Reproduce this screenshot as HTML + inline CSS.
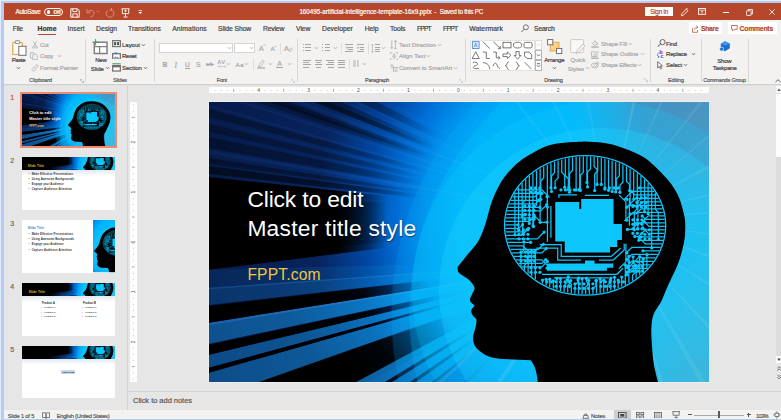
<!DOCTYPE html><html><head><meta charset="utf-8"><title>PowerPoint</title><style>
html,body{margin:0;padding:0}
body{width:781px;height:420px;overflow:hidden;position:relative;background:#b3cbf7;font-family:"Liberation Sans",sans-serif;color:#444}
.a{position:absolute}
.t{position:absolute;white-space:nowrap;line-height:1;color:#3c3c3c;-webkit-text-stroke:0.18px currentColor}
.g{color:#a6a6a6}
.w{color:#fff}
svg{position:absolute;overflow:hidden}
.sep{position:absolute;width:1px;background:#d8d8d8}
.thumb .t{-webkit-text-stroke:0}
.thumb{position:absolute;left:22.3px;width:92.8px;height:52.2px;background:#fff;overflow:hidden}
</style></head><body>
<svg width="0" height="0" style="left:0;top:0"><symbol id="art" viewBox="0 0 500 281" preserveAspectRatio="none">
<defs>
<radialGradient id="glow" gradientUnits="userSpaceOnUse" cx="400.0" cy="118.0" r="420">
<stop offset="0" stop-color="#00b8fc"/><stop offset="0.36" stop-color="#00acf8"/><stop offset="0.44" stop-color="#0090ec"/>
<stop offset="0.5" stop-color="#0070d8"/><stop offset="0.58" stop-color="#0048a4"/><stop offset="0.70" stop-color="#07245e"/><stop offset="1" stop-color="#061a48"/></radialGradient>
<radialGradient id="dk" gradientUnits="userSpaceOnUse" cx="400.0" cy="118.0" r="420">
<stop offset="0" stop-color="#000" stop-opacity="0"/><stop offset="0.42" stop-color="#000" stop-opacity="0"/>
<stop offset="0.6" stop-color="#000" stop-opacity="0.8"/><stop offset="1" stop-color="#000" stop-opacity="1"/></radialGradient>
<radialGradient id="dk2" gradientUnits="userSpaceOnUse" cx="400.0" cy="118.0" r="420">
<stop offset="0" stop-color="#000" stop-opacity="0"/><stop offset="0.45" stop-color="#000" stop-opacity="0"/>
<stop offset="0.61" stop-color="#000" stop-opacity="0.9"/><stop offset="0.7" stop-color="#000" stop-opacity="1"/><stop offset="1" stop-color="#000" stop-opacity="1"/></radialGradient>
<radialGradient id="dk3" gradientUnits="userSpaceOnUse" cx="400.0" cy="118.0" r="420">
<stop offset="0" stop-color="#000" stop-opacity="0"/><stop offset="0.53" stop-color="#000" stop-opacity="0"/>
<stop offset="0.59" stop-color="#000" stop-opacity="0.5"/><stop offset="0.65" stop-color="#000" stop-opacity="1"/><stop offset="1" stop-color="#000" stop-opacity="1"/></radialGradient>
<radialGradient id="lb" gradientUnits="userSpaceOnUse" cx="400.0" cy="118.0" r="460">
<stop offset="0" stop-color="#00b8fc" stop-opacity="0"/><stop offset="0.36" stop-color="#00b4fa" stop-opacity="0.5"/>
<stop offset="0.46" stop-color="#08a0ec" stop-opacity="0.95"/><stop offset="0.56" stop-color="#0c7cc8" stop-opacity="0.95"/><stop offset="0.72" stop-color="#0e5e9e" stop-opacity="1"/><stop offset="1" stop-color="#0d4f8c" stop-opacity="1"/></radialGradient>
<radialGradient id="lt" gradientUnits="userSpaceOnUse" cx="400.0" cy="118.0" r="440">
<stop offset="0" stop-color="#9fe6ff" stop-opacity="0"/><stop offset="0.3" stop-color="#7fd6ff" stop-opacity="0.30"/>
<stop offset="0.6" stop-color="#3a8ae0" stop-opacity="0.45"/><stop offset="1" stop-color="#2a66b8" stop-opacity="0.5"/></radialGradient>
<radialGradient id="lt2" gradientUnits="userSpaceOnUse" cx="400.0" cy="118.0" r="440">
<stop offset="0" stop-color="#9fe6ff" stop-opacity="0"/><stop offset="0.3" stop-color="#7fd6ff" stop-opacity="0.25"/>
<stop offset="0.55" stop-color="#2a68c0" stop-opacity="0.16"/><stop offset="1" stop-color="#1c4c98" stop-opacity="0.13"/></radialGradient>
<radialGradient id="wr" gradientUnits="userSpaceOnUse" cx="400.0" cy="118.0" r="420">
<stop offset="0" stop-color="#fff" stop-opacity="0"/><stop offset="0.2" stop-color="#fff" stop-opacity="0.5"/><stop offset="1" stop-color="#fff" stop-opacity="1"/></radialGradient>
<linearGradient id="topd" x1="0" y1="0" x2="0" y2="1"><stop offset="0" stop-color="#1a6cc0" stop-opacity="0.5"/>
<stop offset="0.5" stop-color="#1a78c8" stop-opacity="0.3"/><stop offset="1" stop-color="#1a80d0" stop-opacity="0"/></linearGradient>
<radialGradient id="tr" gradientUnits="userSpaceOnUse" cx="500" cy="-10" r="145">
<stop offset="0" stop-color="#4a80b0" stop-opacity="1"/><stop offset="0.5" stop-color="#3f90c4" stop-opacity="0.92"/>
<stop offset="0.8" stop-color="#30a4dc" stop-opacity="0.45"/><stop offset="1" stop-color="#20b4f0" stop-opacity="0"/></radialGradient>
<radialGradient id="brr" gradientUnits="userSpaceOnUse" cx="525" cy="305" r="175">
<stop offset="0" stop-color="#5a98b8" stop-opacity="1"/><stop offset="0.3" stop-color="#549cbe" stop-opacity="0.95"/><stop offset="0.6" stop-color="#44acd4" stop-opacity="0.6"/>
<stop offset="1" stop-color="#20bcf0" stop-opacity="0"/></radialGradient>
<linearGradient id="topmg" x1="0" y1="0" x2="1" y2="0"><stop offset="0.54" stop-color="#000"/><stop offset="0.78" stop-color="#fff"/></linearGradient><mask id="topm" maskUnits="userSpaceOnUse" x="0" y="0" width="500" height="70"><rect width="500" height="70" fill="url(#topmg)"/></mask>
<linearGradient id="re" x1="0" y1="0" x2="1" y2="0"><stop offset="0.8" stop-color="#4aa8d0" stop-opacity="0"/><stop offset="1" stop-color="#4ea6cc" stop-opacity="0.5"/></linearGradient>
<clipPath id="sc"><rect width="500" height="281"/></clipPath>
</defs>
<g clip-path="url(#sc)">
<rect width="500" height="281" fill="url(#glow)"/>
<polygon points="400.0,118.0 -320.0,-220.4 -320.0,-213.2" fill="url(#lt2)" opacity="0.5"/>
<polygon points="400.0,118.0 -320.0,-159.2 -320.0,-152.0" fill="url(#lt2)" opacity="0.5"/>
<polygon points="400.0,118.0 -320.0,-116.0 -320.0,-110.6" fill="url(#lt2)" opacity="0.8"/>
<polygon points="400.0,118.0 -320.0,-89.0 -320.0,-85.4" fill="url(#lt2)" opacity="1"/>
<polygon points="400.0,118.0 -320.0,-62.0 -320.0,-59.3" fill="url(#lt2)" opacity="0.6"/>
<polygon points="400.0,118.0 -320.0,-8.0 -320.0,-0.8" fill="url(#lt2)" opacity="0.9"/>
<polygon points="400.0,118.0 -320.0,13.6 -320.0,17.2" fill="url(#lt2)" opacity="0.5"/>
<polygon points="400.0,118.0 -320.0,-198.8 -320.0,-170.0" fill="url(#dk2)" opacity="0.3"/>
<polygon points="400.0,118.0 -320.0,-139.4 -320.0,-121.4" fill="url(#dk2)" opacity="0.3"/>
<polygon points="400.0,118.0 -320.0,-81.8 -320.0,-67.4" fill="url(#dk2)" opacity="0.3"/>
<polygon points="400.0,118.0 -320.0,-54.8 -320.0,-40.4" fill="url(#dk2)" opacity="0.3"/>
<polygon points="400.0,118.0 -320.0,-31.4 -320.0,-11.6" fill="url(#dk2)" opacity="0.35"/>
<polygon points="400.0,118.0 -320.0,6.4 -320.0,17.2" fill="url(#dk2)" opacity="0.4"/>
<polygon points="400.0,118.0 -320.0,20.8 -320.0,35.2" fill="url(#dk2)" opacity="0.55"/>
<polygon points="400.0,118.0 -240.8,-94.4 -233.6,-94.4" fill="url(#lt2)" opacity="0.5"/>
<polygon points="400.0,118.0 -156.2,-94.4 -150.8,-94.4" fill="url(#lt2)" opacity="0.7"/>
<polygon points="400.0,118.0 -78.8,-94.4 -71.6,-94.4" fill="url(#lt2)" opacity="0.5"/>
<polygon points="400.0,118.0 -1.4,-94.4 4.0,-94.4" fill="url(#lt2)" opacity="0.6"/>
<polygon points="400.0,118.0 -212.0,-94.4 -176.0,-94.4" fill="url(#dk2)" opacity="0.4"/>
<polygon points="400.0,118.0 -131.0,-94.4 -104.0,-94.4" fill="url(#dk2)" opacity="0.4"/>
<polygon points="400.0,118.0 -50.0,-94.4 -17.6,-94.4" fill="url(#dk2)" opacity="0.35"/>
<polygon points="400.0,118.0 -320.0,40.6 -320.0,208.0" fill="url(#dk3)" />
<polygon points="400.0,118.0 -320.0,64.0 -320.0,190.0" fill="url(#dk3)" opacity="0.6"/>
<polygon points="397.0,158.0 -317.6,176.0 -317.6,208.4" fill="url(#lb)" opacity="0.2"/>
<polygon points="397.0,158.0 -317.6,208.4 -317.6,239.0" fill="url(#lb)" opacity="0.42"/>
<polygon points="397.0,158.0 -317.6,271.4 -317.6,309.2" fill="url(#lb)" opacity="0.95"/>
<polygon points="397.0,158.0 -317.6,329.0 -317.6,352.4" fill="url(#lb)" opacity="0.85"/>
<polygon points="397.0,158.0 -317.6,361.4 -317.6,413.6" fill="url(#lb)" opacity="0.9"/>
<polygon points="397.0,158.0 -317.6,271.4 -317.6,275.9" fill="url(#lt)" />
<polygon points="397.0,158.0 -317.6,208.4 -317.6,211.1" fill="url(#lt)" opacity="0.6"/>
<polygon points="397.0,158.0 -317.6,240.8 -317.6,271.4" fill="url(#dk2)" />
<polygon points="397.0,158.0 -317.6,311.0 -317.6,329.0" fill="url(#dk2)" />
<polygon points="397.0,158.0 -317.6,352.4 -317.6,361.4" fill="url(#dk2)" />
<polygon points="397.0,158.0 -317.6,413.6 -231.2,379.4" fill="url(#lb)" opacity="0.9"/>
<polygon points="397.0,158.0 -231.2,379.4 -54.8,389.0" fill="url(#dk2)" />
<polygon points="397.0,146.0 -54.8,389.0 -2.6,389.0" fill="url(#lb)" opacity="0.9"/>
<polygon points="397.0,146.0 10.0,389.0 42.4,389.0" fill="url(#lb)" opacity="0.8"/>
<polygon points="397.0,146.0 53.2,389.0 82.0,389.0" fill="url(#lb)" opacity="0.7"/>
<polygon points="397.0,146.0 -2.6,389.0 10.0,389.0" fill="url(#dk)" opacity="0.9"/>
<polygon points="397.0,146.0 42.4,389.0 53.2,389.0" fill="url(#dk)" opacity="0.8"/>
<polygon points="397.0,146.0 82.0,389.0 89.2,389.0" fill="url(#dk)" opacity="0.7"/>
<polygon points="397.0,146.0 139.6,389.0 148.6,389.0" fill="url(#dk)" opacity="0.6"/>
<circle cx="491.5" cy="213" r="309" fill="#00b8ff" opacity="0.18"/>
<circle cx="491.5" cy="213" r="291" fill="#00c4ff" opacity="0.26"/>
<rect width="500" height="281" fill="url(#tr)"/>
<rect width="500" height="281" fill="url(#brr)"/>
<rect width="500" height="281" fill="url(#re)"/>
<circle cx="393" cy="189" r="190" fill="#10d0ff" opacity="0.20"/>
<circle cx="393" cy="189" r="163" fill="#20d8ff" opacity="0.30"/>
<polygon points="400.0,118.0 483.0,-293.7 491.6,-291.9" fill="url(#wr)" opacity="0.22"/>
<polygon points="400.0,118.0 568.1,-266.9 573.5,-264.5" fill="url(#wr)" opacity="0.16"/>
<polygon points="400.0,118.0 655.7,-215.2 661.5,-210.7" fill="url(#wr)" opacity="0.14"/>
<polygon points="400.0,118.0 720.1,-153.9 723.4,-150.0" fill="url(#wr)" opacity="0.16"/>
<polygon points="400.0,118.0 768.4,-83.7 773.2,-74.6" fill="url(#wr)" opacity="0.14"/>
<polygon points="400.0,118.0 806.8,13.6 808.2,19.2" fill="url(#wr)" opacity="0.18"/>
<polygon points="400.0,118.0 818.7,85.0 819.2,92.4" fill="url(#wr)" opacity="0.14"/>
<polygon points="400.0,118.0 816.3,173.5 815.5,179.4" fill="url(#wr)" opacity="0.16"/>
<polygon points="400.0,118.0 796.2,257.5 793.1,265.8" fill="url(#wr)" opacity="0.14"/>
<polygon points="400.0,118.0 753.8,344.3 750.6,349.2" fill="url(#wr)" opacity="0.16"/>
<polygon points="400.0,118.0 689.1,422.7 683.7,427.7" fill="url(#wr)" opacity="0.14"/>
<polygon points="400.0,118.0 614.7,479.0 605.2,484.4" fill="url(#wr)" opacity="0.12"/>
<polygon points="400.0,118.0 532.6,516.5 527.0,518.3" fill="url(#wr)" opacity="0.16"/>
<polygon points="400.0,118.0 447.5,535.3 440.3,536.1" fill="url(#wr)" opacity="0.14"/>
<polygon points="400.0,118.0 330.7,532.2 323.5,531.0" fill="url(#wr)" opacity="0.16"/>
<polygon points="400.0,118.0 245.0,508.4 240.3,506.4" fill="url(#wr)" opacity="0.14"/>
<polygon points="400.0,118.0 168.8,468.6 161.5,463.7" fill="url(#wr)" opacity="0.14"/>
<polygon points="400.0,118.0 99.9,411.9 95.8,407.6" fill="url(#wr)" opacity="0.12"/>
<polygon points="400.0,118.0 323.8,-295.0 330.3,-296.2" fill="url(#wr)" opacity="0.14"/>
<polygon points="400.0,118.0 218.5,-260.8 226.5,-264.5" fill="url(#wr)" opacity="0.12"/>
<polygon points="400.0,118.0 139.1,-211.2 143.7,-214.8" fill="url(#wr)" opacity="0.12"/>
<path d="M376.2,39.5 C372.7,39.7 361.7,39.9 355.0,40.8 C348.3,41.7 343.2,41.8 336.0,44.8 C328.8,47.8 317.8,54.2 311.5,58.7 C305.2,63.2 301.5,68.0 298.0,72.0 C294.5,76.0 292.9,78.7 290.5,83.0 C288.1,87.3 285.3,93.3 283.5,98.0 C281.7,102.7 280.8,106.5 279.5,111.0 C278.2,115.5 277.2,120.2 275.5,125.0 C273.8,129.8 271.9,135.2 269.0,140.0 C266.1,144.8 261.4,149.2 258.0,153.5 C254.6,157.8 250.2,163.5 248.6,165.5 C248.8,166.3 248.6,169.1 249.5,170.5 C250.4,171.9 252.1,172.6 254.0,174.0 C255.9,175.4 259.1,177.0 261.0,179.0 C262.9,181.0 265.1,183.9 265.5,186.0 C265.9,188.1 264.2,189.6 263.5,191.5 C262.8,193.4 261.2,195.9 261.0,197.5 C260.8,199.1 261.8,199.9 262.5,201.0 C263.2,202.1 265.4,203.0 265.5,204.0 C265.6,205.0 263.5,206.0 263.0,207.0 C262.5,208.0 262.1,208.8 262.3,210.0 C262.5,211.2 263.1,212.7 264.0,214.0 C264.9,215.3 267.1,216.0 267.5,218.0 C267.9,220.0 267.1,223.0 266.5,226.0 C265.9,229.0 264.1,232.8 264.1,236.0 C264.1,239.2 264.8,242.3 266.5,245.0 C268.2,247.7 271.9,250.2 274.5,252.0 C277.1,253.8 279.1,254.6 282.0,255.5 C284.9,256.4 290.3,256.9 292.0,257.2 L322,258.6 C322.7,259.8 325.0,263.4 326.0,266.0 C327.0,268.6 327.5,271.2 328.0,274.0 C328.5,276.8 328.8,281.5 329.0,283.0 L449.8,283 C449.2,280.8 447.4,273.9 446.5,270.0 C445.6,266.1 445.1,264.4 444.5,259.4 C443.9,254.4 443.1,245.9 442.8,240.0 C442.5,234.1 442.2,228.4 442.6,223.7 C443.0,219.0 443.4,215.8 445.0,211.8 C446.6,207.8 450.0,204.3 452.3,199.7 C454.6,195.1 456.1,190.4 459.0,184.0 C461.9,177.6 466.8,168.2 469.5,161.0 C472.2,153.8 473.9,146.5 475.0,141.0 C476.1,135.5 476.2,132.3 476.3,128.0 C476.4,123.7 476.6,120.2 475.6,115.0 C474.6,109.8 472.6,102.0 470.5,96.7 C468.4,91.4 465.7,87.0 463.0,83.0 C460.3,79.0 457.7,76.4 454.5,73.0 C451.3,69.6 447.6,65.6 444.0,62.5 C440.4,59.4 438.4,57.1 433.0,54.2 C427.6,51.3 418.0,47.2 411.5,45.0 C405.0,42.8 399.9,41.7 394.0,40.8 C388.1,39.9 379.2,39.7 376.2,39.5 Z" fill="#000"/>
<ellipse cx="376.2" cy="123.5" rx="83.3" ry="72.5" fill="#000"/><clipPath id="bclip"><ellipse cx="376.2" cy="123.5" rx="80.89999999999999" ry="70.1"/></clipPath><g clip-path="url(#bclip)"><path d="M346.3,100.2 L370.3,100.2 L370.3,107.2 L372.3,107.2 L372.3,97.2 L404.6,97.2 L404.6,122.2 L413,122.2 L413,138.2 L408.3,138.2 L408.3,145.2 L401.1,145.2 L401.1,150.6 L355.8,150.6 L355.8,139.7 L346.3,139.7 Z" fill="#0cc6fc"/><path d="M338,161.7 L376.1,161.7 L376.1,158.7 L385.6,158.7 L385.6,161.7 L404.3,161.7 L404.3,166 L398,166 L398,168.900 L338,168.900 Z" fill="#0cc6fc"/><path d="M306.0,90.7 L306.0,133.0" fill="none" stroke="#0cc6fc" stroke-width="1.25"/><path d="M309.6,85.5 L309.6,128.3" fill="none" stroke="#0cc6fc" stroke-width="1.25"/><path d="M313.2,81.1 L313.2,113.8" fill="none" stroke="#0cc6fc" stroke-width="1.25"/><path d="M316.8,77.4 L316.8,98.0 L313.8,101.0 L313.8,132.0" fill="none" stroke="#0cc6fc" stroke-width="1.25"/><path d="M320.4,74.2 L320.4,121.6" fill="none" stroke="#0cc6fc" stroke-width="1.25"/><path d="M324.0,71.3 L324.0,123.9" fill="none" stroke="#0cc6fc" stroke-width="1.25"/><path d="M327.6,68.8 L327.6,103.1 L324.6,106.1 L324.6,124.7" fill="none" stroke="#0cc6fc" stroke-width="1.25"/><path d="M331.2,66.5 L331.2,120.5" fill="none" stroke="#0cc6fc" stroke-width="1.25"/><path d="M334.8,64.5 L334.8,76.1 L331.8,79.1 L331.8,97.5" fill="none" stroke="#0cc6fc" stroke-width="1.25"/><path d="M338.4,62.7 L338.4,105.2" fill="none" stroke="#0cc6fc" stroke-width="1.25"/><path d="M342.0,61.2 L342.0,86.0" fill="none" stroke="#0cc6fc" stroke-width="1.25"/><path d="M345.6,59.8 L345.6,70.8 L342.6,73.8 L342.6,89.6" fill="none" stroke="#0cc6fc" stroke-width="1.25"/><path d="M349.2,58.6 L349.2,76.0 L346.2,79.0 L346.2,85.9" fill="none" stroke="#0cc6fc" stroke-width="1.25"/><path d="M352.8,57.5 L352.8,70.4 L355.8,73.4 L355.8,85.4" fill="none" stroke="#0cc6fc" stroke-width="1.25"/><path d="M356.4,56.7 L356.4,73.8 L359.4,76.8 L359.4,87.6" fill="none" stroke="#0cc6fc" stroke-width="1.25"/><path d="M360.0,55.9 L360.0,85.1" fill="none" stroke="#0cc6fc" stroke-width="1.25"/><path d="M363.6,55.4 L363.6,68.6 L360.6,71.6 L360.6,90.3" fill="none" stroke="#0cc6fc" stroke-width="1.25"/><path d="M367.2,54.9 L367.2,88.1" fill="none" stroke="#0cc6fc" stroke-width="1.25"/><path d="M370.8,54.7 L370.8,87.4" fill="none" stroke="#0cc6fc" stroke-width="1.25"/><path d="M374.4,54.5 L374.4,70.4 L371.4,73.4 L371.4,88.5" fill="none" stroke="#0cc6fc" stroke-width="1.25"/><path d="M378.0,54.5 L378.0,80.5" fill="none" stroke="#0cc6fc" stroke-width="1.25"/><path d="M381.6,54.7 L381.6,67.0 L378.6,70.0 L378.6,85.0" fill="none" stroke="#0cc6fc" stroke-width="1.25"/><path d="M385.2,54.9 L385.2,64.6 L388.2,67.6 L388.2,82.5" fill="none" stroke="#0cc6fc" stroke-width="1.25"/><path d="M388.8,55.4 L388.8,69.1 L385.8,72.1 L385.8,88.7" fill="none" stroke="#0cc6fc" stroke-width="1.25"/><path d="M392.4,55.9 L392.4,82.5" fill="none" stroke="#0cc6fc" stroke-width="1.25"/><path d="M396.0,56.7 L396.0,87.2" fill="none" stroke="#0cc6fc" stroke-width="1.25"/><path d="M399.6,57.5 L399.6,88.4" fill="none" stroke="#0cc6fc" stroke-width="1.25"/><path d="M403.2,58.6 L403.2,89.6" fill="none" stroke="#0cc6fc" stroke-width="1.25"/><path d="M406.8,59.8 L406.8,90.0" fill="none" stroke="#0cc6fc" stroke-width="1.25"/><path d="M410.4,61.2 L410.4,73.9 L407.4,76.9 L407.4,86.9" fill="none" stroke="#0cc6fc" stroke-width="1.25"/><path d="M414.0,62.7 L414.0,80.4 L411.0,83.4 L411.0,90.4" fill="none" stroke="#0cc6fc" stroke-width="1.25"/><path d="M417.6,64.5 L417.6,79.5 L420.6,82.5 L420.6,88.7" fill="none" stroke="#0cc6fc" stroke-width="1.25"/><path d="M421.2,66.5 L421.2,103.1" fill="none" stroke="#0cc6fc" stroke-width="1.25"/><path d="M424.8,68.8 L424.8,97.2" fill="none" stroke="#0cc6fc" stroke-width="1.25"/><path d="M428.4,71.3 L428.4,106.8 L425.4,109.8 L425.4,128.0" fill="none" stroke="#0cc6fc" stroke-width="1.25"/><path d="M432.0,74.2 L432.0,96.7 L429.0,99.7 L429.0,127.1" fill="none" stroke="#0cc6fc" stroke-width="1.25"/><path d="M435.6,77.4 L435.6,109.8" fill="none" stroke="#0cc6fc" stroke-width="1.25"/><path d="M439.2,81.1 L439.2,111.9" fill="none" stroke="#0cc6fc" stroke-width="1.25"/><path d="M442.8,85.5 L442.8,146.1" fill="none" stroke="#0cc6fc" stroke-width="1.25"/><path d="M446.4,90.7 L446.4,107.4 L449.4,110.4 L449.4,137.7" fill="none" stroke="#0cc6fc" stroke-width="1.25"/><path d="M312.0,164.5 L312.0,151.2 L315.0,148.2 L315.0,139.9" fill="none" stroke="#0cc6fc" stroke-width="1.25"/><path d="M315.6,168.4 L315.6,163.5 L318.6,160.5 L318.6,155.2" fill="none" stroke="#0cc6fc" stroke-width="1.25"/><path d="M319.2,171.8 L319.2,150.0" fill="none" stroke="#0cc6fc" stroke-width="1.25"/><path d="M322.8,174.8 L322.8,149.5" fill="none" stroke="#0cc6fc" stroke-width="1.25"/><path d="M326.4,177.4 L326.4,148.9" fill="none" stroke="#0cc6fc" stroke-width="1.25"/><path d="M333.6,181.8 L333.6,178.2" fill="none" stroke="#0cc6fc" stroke-width="1.25"/><path d="M337.2,183.7 L337.2,177.5" fill="none" stroke="#0cc6fc" stroke-width="1.25"/><path d="M340.8,185.3 L340.8,177.4" fill="none" stroke="#0cc6fc" stroke-width="1.25"/><path d="M344.4,186.8 L344.4,179.0" fill="none" stroke="#0cc6fc" stroke-width="1.25"/><path d="M348.0,188.0 L348.0,176.6" fill="none" stroke="#0cc6fc" stroke-width="1.25"/><path d="M351.6,189.1 L351.6,176.8" fill="none" stroke="#0cc6fc" stroke-width="1.25"/><path d="M355.2,190.1 L355.2,183.7 L358.2,180.7 L358.2,178.0" fill="none" stroke="#0cc6fc" stroke-width="1.25"/><path d="M358.8,190.8 L358.8,183.8 L361.8,180.8 L361.8,178.8" fill="none" stroke="#0cc6fc" stroke-width="1.25"/><path d="M362.4,191.5 L362.4,182.4 L359.4,179.4 L359.4,175.0" fill="none" stroke="#0cc6fc" stroke-width="1.25"/><path d="M366.0,191.9 L366.0,183.2 L369.0,180.2 L369.0,178.0" fill="none" stroke="#0cc6fc" stroke-width="1.25"/><path d="M369.6,192.3 L369.6,176.3" fill="none" stroke="#0cc6fc" stroke-width="1.25"/><path d="M373.2,192.5 L373.2,176.9" fill="none" stroke="#0cc6fc" stroke-width="1.25"/><path d="M376.8,192.5 L376.8,185.2 L379.8,182.2 L379.8,178.5" fill="none" stroke="#0cc6fc" stroke-width="1.25"/><path d="M380.4,192.4 L380.4,182.6 L377.4,179.6 L377.4,176.6" fill="none" stroke="#0cc6fc" stroke-width="1.25"/><path d="M384.0,192.2 L384.0,186.8 L387.0,183.8 L387.0,178.8" fill="none" stroke="#0cc6fc" stroke-width="1.25"/><path d="M387.6,191.8 L387.6,178.7" fill="none" stroke="#0cc6fc" stroke-width="1.25"/><path d="M391.2,191.3 L391.2,177.1" fill="none" stroke="#0cc6fc" stroke-width="1.25"/><path d="M394.8,190.6 L394.8,178.4" fill="none" stroke="#0cc6fc" stroke-width="1.25"/><path d="M398.4,189.8 L398.4,183.7 L401.4,180.7 L401.4,178.3" fill="none" stroke="#0cc6fc" stroke-width="1.25"/><path d="M402.0,188.8 L402.0,176.2" fill="none" stroke="#0cc6fc" stroke-width="1.25"/><path d="M405.6,187.6 L405.6,175.5" fill="none" stroke="#0cc6fc" stroke-width="1.25"/><path d="M409.2,186.3 L409.2,178.3" fill="none" stroke="#0cc6fc" stroke-width="1.25"/><path d="M412.8,184.8 L412.8,175.2" fill="none" stroke="#0cc6fc" stroke-width="1.25"/><path d="M416.4,183.1 L416.4,163.1" fill="none" stroke="#0cc6fc" stroke-width="1.25"/><path d="M420.0,181.2 L420.0,154.6" fill="none" stroke="#0cc6fc" stroke-width="1.25"/><path d="M423.6,179.0 L423.6,173.5 L426.6,170.5 L426.6,163.4" fill="none" stroke="#0cc6fc" stroke-width="1.25"/><path d="M427.2,176.6 L427.2,163.9 L424.2,160.9 L424.2,154.9" fill="none" stroke="#0cc6fc" stroke-width="1.25"/><path d="M430.8,173.8 L430.8,154.7" fill="none" stroke="#0cc6fc" stroke-width="1.25"/><path d="M434.4,170.7 L434.4,157.1" fill="none" stroke="#0cc6fc" stroke-width="1.25"/><path d="M438.0,167.2 L438.0,152.8" fill="none" stroke="#0cc6fc" stroke-width="1.25"/><path d="M307.8,88.0 L333.0,88.0 L339.8,94.8 L338.0,94.8" fill="none" stroke="#0cc6fc" stroke-width="1.25"/><path d="M305.5,91.5 L333.0,91.5" fill="none" stroke="#0cc6fc" stroke-width="1.25"/><path d="M303.5,95.0 L325.7,95.0 L329.5,91.2" fill="none" stroke="#0cc6fc" stroke-width="1.25"/><path d="M301.8,98.5 L329.7,98.5" fill="none" stroke="#0cc6fc" stroke-width="1.25"/><path d="M300.4,102.0 L326.5,102.0 L330.3,98.1" fill="none" stroke="#0cc6fc" stroke-width="1.25"/><path d="M299.2,105.5 L331.0,105.5" fill="none" stroke="#0cc6fc" stroke-width="1.25"/><path d="M298.2,109.0 L331.7,109.0 L337.8,102.8" fill="none" stroke="#0cc6fc" stroke-width="1.25"/><path d="M297.4,112.5 L316.5,112.5" fill="none" stroke="#0cc6fc" stroke-width="1.25"/><path d="M296.9,116.0 L327.7,116.0 L332.1,120.4 L338.0,120.4" fill="none" stroke="#0cc6fc" stroke-width="1.25"/><path d="M296.5,119.5 L320.6,119.5 L325.6,114.6" fill="none" stroke="#0cc6fc" stroke-width="1.25"/><path d="M296.4,123.0 L309.0,123.0" fill="none" stroke="#0cc6fc" stroke-width="1.25"/><path d="M296.5,126.5 L309.9,126.5 L313.6,122.8" fill="none" stroke="#0cc6fc" stroke-width="1.25"/><path d="M296.8,130.0 L316.1,130.0 L319.7,126.4" fill="none" stroke="#0cc6fc" stroke-width="1.25"/><path d="M297.2,133.5 L312.5,133.5 L318.4,127.6" fill="none" stroke="#0cc6fc" stroke-width="1.25"/><path d="M297.9,137.0 L328.4,137.0 L335.2,130.2" fill="none" stroke="#0cc6fc" stroke-width="1.25"/><path d="M298.9,140.5 L321.7,140.5" fill="none" stroke="#0cc6fc" stroke-width="1.25"/><path d="M300.0,144.0 L313.9,144.0 L320.5,150.6 L325.6,150.6" fill="none" stroke="#0cc6fc" stroke-width="1.25"/><path d="M301.4,147.5 L329.4,147.5 L334.5,142.4" fill="none" stroke="#0cc6fc" stroke-width="1.25"/><path d="M303.0,151.0 L333.0,151.0 L337.2,146.8" fill="none" stroke="#0cc6fc" stroke-width="1.25"/><path d="M304.9,154.5 L325.3,154.5" fill="none" stroke="#0cc6fc" stroke-width="1.25"/><path d="M307.1,158.0 L333.0,158.0 L341.3,166.3 L338.0,166.3" fill="none" stroke="#0cc6fc" stroke-width="1.25"/><path d="M309.6,161.5 L333.0,161.5 L336.8,157.7" fill="none" stroke="#0cc6fc" stroke-width="1.25"/><path d="M312.4,165.0 L333.0,165.0 L338.4,159.6" fill="none" stroke="#0cc6fc" stroke-width="1.25"/><path d="M443.2,86.0 L430.6,86.0" fill="none" stroke="#0cc6fc" stroke-width="1.25"/><path d="M445.6,89.5 L423.3,89.5 L415.3,97.5 L418.0,97.5" fill="none" stroke="#0cc6fc" stroke-width="1.25"/><path d="M447.8,93.0 L426.0,93.0 L422.7,89.7" fill="none" stroke="#0cc6fc" stroke-width="1.25"/><path d="M449.6,96.5 L426.9,96.5 L418.1,105.3 L418.0,105.3" fill="none" stroke="#0cc6fc" stroke-width="1.25"/><path d="M451.2,100.0 L433.8,100.0 L429.2,104.6 L424.0,104.6" fill="none" stroke="#0cc6fc" stroke-width="1.25"/><path d="M452.6,103.5 L424.3,103.5" fill="none" stroke="#0cc6fc" stroke-width="1.25"/><path d="M453.7,107.0 L432.2,107.0 L427.2,112.0 L421.1,112.0" fill="none" stroke="#0cc6fc" stroke-width="1.25"/><path d="M454.6,110.5 L424.1,110.5 L416.2,118.4 L418.0,118.4" fill="none" stroke="#0cc6fc" stroke-width="1.25"/><path d="M455.2,114.0 L439.4,114.0 L431.9,121.4 L427.3,121.4" fill="none" stroke="#0cc6fc" stroke-width="1.25"/><path d="M455.7,117.5 L436.6,117.5 L433.2,114.1" fill="none" stroke="#0cc6fc" stroke-width="1.25"/><path d="M455.9,121.0 L429.3,121.0 L422.8,127.6 L418.5,127.6" fill="none" stroke="#0cc6fc" stroke-width="1.25"/><path d="M456.0,124.5 L440.0,124.5 L435.3,119.8" fill="none" stroke="#0cc6fc" stroke-width="1.25"/><path d="M455.8,128.0 L436.3,128.0 L429.7,134.6 L425.9,134.6" fill="none" stroke="#0cc6fc" stroke-width="1.25"/><path d="M455.5,131.5 L439.4,131.5 L433.8,125.9" fill="none" stroke="#0cc6fc" stroke-width="1.25"/><path d="M454.9,135.0 L432.3,135.0" fill="none" stroke="#0cc6fc" stroke-width="1.25"/><path d="M454.1,138.5 L429.9,138.5" fill="none" stroke="#0cc6fc" stroke-width="1.25"/><path d="M453.1,142.0 L436.4,142.0 L430.2,135.8" fill="none" stroke="#0cc6fc" stroke-width="1.25"/><path d="M451.8,145.5 L423.0,145.5 L417.4,151.1 L418.0,151.1" fill="none" stroke="#0cc6fc" stroke-width="1.25"/><path d="M450.4,149.0 L434.0,149.0" fill="none" stroke="#0cc6fc" stroke-width="1.25"/><path d="M448.6,152.5 L423.0,152.5 L417.8,157.7 L418.0,157.7" fill="none" stroke="#0cc6fc" stroke-width="1.25"/><path d="M446.6,156.0 L429.4,156.0 L421.2,164.2 L418.0,164.2" fill="none" stroke="#0cc6fc" stroke-width="1.25"/><path d="M444.3,159.5 L423.0,159.5 L417.0,165.5 L418.0,165.5" fill="none" stroke="#0cc6fc" stroke-width="1.25"/><path d="M441.6,163.0 L429.3,163.0 L421.9,170.4 L418.0,170.4" fill="none" stroke="#0cc6fc" stroke-width="1.25"/><path d="M438.6,166.5 L423.0,166.5 L416.5,173.0 L418.0,173.0" fill="none" stroke="#0cc6fc" stroke-width="1.25"/><path d="M435.2,170.0 L423.0,170.0 L419.2,166.2" fill="none" stroke="#0cc6fc" stroke-width="1.25"/><path d="M330.8,142.7 L352.3,142.7 L352.3,154.6 L402.3,154.6 L411.8,146.2" fill="none" stroke="#0cc6fc" stroke-width="1.25"/><path d="M327.3,146.2 L348.8,146.2 L348.8,158.2 L372.0,158.2" fill="none" stroke="#0cc6fc" stroke-width="1.25"/><path d="M390.0,158.2 L404.3,158.2 L415.3,148.2 L415.3,142.0" fill="none" stroke="#0cc6fc" stroke-width="1.25"/><path d="M342.0,104.0 L342.0,136.0" fill="none" stroke="#0cc6fc" stroke-width="1.25"/><path d="M338.5,98.0 L338.5,140.0" fill="none" stroke="#0cc6fc" stroke-width="1.25"/><path d="M417.0,118.0 L417.0,100.0 L410.0,93.0" fill="none" stroke="#0cc6fc" stroke-width="1.25"/><path d="M420.5,124.0 L420.5,96.0" fill="none" stroke="#0cc6fc" stroke-width="1.25"/><path d="M417.0,142.0 L417.0,160.0 L410.0,167.0" fill="none" stroke="#0cc6fc" stroke-width="1.25"/><path d="M350.0,96.0 L350.0,93.0 L368.0,93.0" fill="none" stroke="#0cc6fc" stroke-width="1.25"/><path d="M376.0,93.5 L400.0,93.5" fill="none" stroke="#0cc6fc" stroke-width="1.25"/><path d="M333.0,172.5 L408.0,172.5 L414.0,166.5" fill="none" stroke="#0cc6fc" stroke-width="1.25"/><path d="M345.0,176.0 L400.0,176.0" fill="none" stroke="#0cc6fc" stroke-width="1.25"/><circle cx="306.0" cy="133.0" r="1.6" fill="#0cc6fc"/><circle cx="309.6" cy="128.3" r="1.6" fill="#0cc6fc"/><circle cx="313.2" cy="113.8" r="1.6" fill="#0cc6fc"/><circle cx="313.8" cy="132.0" r="1.6" fill="#0cc6fc"/><circle cx="320.4" cy="121.6" r="1.6" fill="#0cc6fc"/><circle cx="324.0" cy="123.9" r="1.6" fill="#0cc6fc"/><circle cx="324.6" cy="124.7" r="1.6" fill="#0cc6fc"/><circle cx="331.2" cy="120.5" r="1.6" fill="#0cc6fc"/><circle cx="331.8" cy="97.5" r="1.6" fill="#0cc6fc"/><circle cx="338.4" cy="105.2" r="1.6" fill="#0cc6fc"/><circle cx="342.0" cy="86.0" r="1.6" fill="#0cc6fc"/><circle cx="342.6" cy="89.6" r="1.6" fill="#0cc6fc"/><circle cx="346.2" cy="85.9" r="1.6" fill="#0cc6fc"/><circle cx="355.8" cy="85.4" r="1.6" fill="#0cc6fc"/><circle cx="359.4" cy="87.6" r="1.6" fill="#0cc6fc"/><circle cx="360.0" cy="85.1" r="1.6" fill="#0cc6fc"/><circle cx="360.6" cy="90.3" r="1.6" fill="#0cc6fc"/><circle cx="367.2" cy="88.1" r="1.6" fill="#0cc6fc"/><circle cx="370.8" cy="87.4" r="1.6" fill="#0cc6fc"/><circle cx="371.4" cy="88.5" r="1.6" fill="#0cc6fc"/><circle cx="378.0" cy="80.5" r="1.6" fill="#0cc6fc"/><circle cx="378.6" cy="85.0" r="1.6" fill="#0cc6fc"/><circle cx="388.2" cy="82.5" r="1.6" fill="#0cc6fc"/><circle cx="385.8" cy="88.7" r="1.6" fill="#0cc6fc"/><circle cx="392.4" cy="82.5" r="1.6" fill="#0cc6fc"/><circle cx="396.0" cy="87.2" r="1.6" fill="#0cc6fc"/><circle cx="399.6" cy="88.4" r="1.6" fill="#0cc6fc"/><circle cx="403.2" cy="89.6" r="1.6" fill="#0cc6fc"/><circle cx="406.8" cy="90.0" r="1.6" fill="#0cc6fc"/><circle cx="407.4" cy="86.9" r="1.6" fill="#0cc6fc"/><circle cx="411.0" cy="90.4" r="1.6" fill="#0cc6fc"/><circle cx="420.6" cy="88.7" r="1.6" fill="#0cc6fc"/><circle cx="421.2" cy="103.1" r="1.6" fill="#0cc6fc"/><circle cx="424.8" cy="97.2" r="1.6" fill="#0cc6fc"/><circle cx="425.4" cy="128.0" r="1.6" fill="#0cc6fc"/><circle cx="429.0" cy="127.1" r="1.6" fill="#0cc6fc"/><circle cx="435.6" cy="109.8" r="1.6" fill="#0cc6fc"/><circle cx="439.2" cy="111.9" r="1.6" fill="#0cc6fc"/><circle cx="442.8" cy="146.1" r="1.6" fill="#0cc6fc"/><circle cx="449.4" cy="137.7" r="1.6" fill="#0cc6fc"/><circle cx="315.0" cy="139.9" r="1.6" fill="#0cc6fc"/><circle cx="318.6" cy="155.2" r="1.6" fill="#0cc6fc"/><circle cx="319.2" cy="150.0" r="1.6" fill="#0cc6fc"/><circle cx="322.8" cy="149.5" r="1.6" fill="#0cc6fc"/><circle cx="326.4" cy="148.9" r="1.6" fill="#0cc6fc"/><circle cx="333.6" cy="178.2" r="1.6" fill="#0cc6fc"/><circle cx="337.2" cy="177.5" r="1.6" fill="#0cc6fc"/><circle cx="340.8" cy="177.4" r="1.6" fill="#0cc6fc"/><circle cx="344.4" cy="179.0" r="1.6" fill="#0cc6fc"/><circle cx="348.0" cy="176.6" r="1.6" fill="#0cc6fc"/><circle cx="351.6" cy="176.8" r="1.6" fill="#0cc6fc"/><circle cx="358.2" cy="178.0" r="1.6" fill="#0cc6fc"/><circle cx="361.8" cy="178.8" r="1.6" fill="#0cc6fc"/><circle cx="359.4" cy="175.0" r="1.6" fill="#0cc6fc"/><circle cx="369.0" cy="178.0" r="1.6" fill="#0cc6fc"/><circle cx="369.6" cy="176.3" r="1.6" fill="#0cc6fc"/><circle cx="373.2" cy="176.9" r="1.6" fill="#0cc6fc"/><circle cx="379.8" cy="178.5" r="1.6" fill="#0cc6fc"/><circle cx="377.4" cy="176.6" r="1.6" fill="#0cc6fc"/><circle cx="387.0" cy="178.8" r="1.6" fill="#0cc6fc"/><circle cx="387.6" cy="178.7" r="1.6" fill="#0cc6fc"/><circle cx="391.2" cy="177.1" r="1.6" fill="#0cc6fc"/><circle cx="394.8" cy="178.4" r="1.6" fill="#0cc6fc"/><circle cx="401.4" cy="178.3" r="1.6" fill="#0cc6fc"/><circle cx="402.0" cy="176.2" r="1.6" fill="#0cc6fc"/><circle cx="405.6" cy="175.5" r="1.6" fill="#0cc6fc"/><circle cx="409.2" cy="178.3" r="1.6" fill="#0cc6fc"/><circle cx="412.8" cy="175.2" r="1.6" fill="#0cc6fc"/><circle cx="416.4" cy="163.1" r="1.6" fill="#0cc6fc"/><circle cx="420.0" cy="154.6" r="1.6" fill="#0cc6fc"/><circle cx="426.6" cy="163.4" r="1.6" fill="#0cc6fc"/><circle cx="424.2" cy="154.9" r="1.6" fill="#0cc6fc"/><circle cx="430.8" cy="154.7" r="1.6" fill="#0cc6fc"/><circle cx="434.4" cy="157.1" r="1.6" fill="#0cc6fc"/><circle cx="438.0" cy="152.8" r="1.6" fill="#0cc6fc"/><circle cx="338.0" cy="94.8" r="1.6" fill="#0cc6fc"/><circle cx="333.0" cy="91.5" r="1.6" fill="#0cc6fc"/><circle cx="329.5" cy="91.2" r="1.6" fill="#0cc6fc"/><circle cx="329.7" cy="98.5" r="1.6" fill="#0cc6fc"/><circle cx="330.3" cy="98.1" r="1.6" fill="#0cc6fc"/><circle cx="331.0" cy="105.5" r="1.6" fill="#0cc6fc"/><circle cx="337.8" cy="102.8" r="1.6" fill="#0cc6fc"/><circle cx="316.5" cy="112.5" r="1.6" fill="#0cc6fc"/><circle cx="338.0" cy="120.4" r="1.6" fill="#0cc6fc"/><circle cx="325.6" cy="114.6" r="1.6" fill="#0cc6fc"/><circle cx="309.0" cy="123.0" r="1.6" fill="#0cc6fc"/><circle cx="313.6" cy="122.8" r="1.6" fill="#0cc6fc"/><circle cx="319.7" cy="126.4" r="1.6" fill="#0cc6fc"/><circle cx="318.4" cy="127.6" r="1.6" fill="#0cc6fc"/><circle cx="335.2" cy="130.2" r="1.6" fill="#0cc6fc"/><circle cx="321.7" cy="140.5" r="1.6" fill="#0cc6fc"/><circle cx="325.6" cy="150.6" r="1.6" fill="#0cc6fc"/><circle cx="334.5" cy="142.4" r="1.6" fill="#0cc6fc"/><circle cx="337.2" cy="146.8" r="1.6" fill="#0cc6fc"/><circle cx="325.3" cy="154.5" r="1.6" fill="#0cc6fc"/><circle cx="338.0" cy="166.3" r="1.6" fill="#0cc6fc"/><circle cx="336.8" cy="157.7" r="1.6" fill="#0cc6fc"/><circle cx="338.4" cy="159.6" r="1.6" fill="#0cc6fc"/><circle cx="430.6" cy="86.0" r="1.6" fill="#0cc6fc"/><circle cx="418.0" cy="97.5" r="1.6" fill="#0cc6fc"/><circle cx="422.7" cy="89.7" r="1.6" fill="#0cc6fc"/><circle cx="418.0" cy="105.3" r="1.6" fill="#0cc6fc"/><circle cx="424.0" cy="104.6" r="1.6" fill="#0cc6fc"/><circle cx="424.3" cy="103.5" r="1.6" fill="#0cc6fc"/><circle cx="421.1" cy="112.0" r="1.6" fill="#0cc6fc"/><circle cx="418.0" cy="118.4" r="1.6" fill="#0cc6fc"/><circle cx="427.3" cy="121.4" r="1.6" fill="#0cc6fc"/><circle cx="433.2" cy="114.1" r="1.6" fill="#0cc6fc"/><circle cx="418.5" cy="127.6" r="1.6" fill="#0cc6fc"/><circle cx="435.3" cy="119.8" r="1.6" fill="#0cc6fc"/><circle cx="425.9" cy="134.6" r="1.6" fill="#0cc6fc"/><circle cx="433.8" cy="125.9" r="1.6" fill="#0cc6fc"/><circle cx="432.3" cy="135.0" r="1.6" fill="#0cc6fc"/><circle cx="429.9" cy="138.5" r="1.6" fill="#0cc6fc"/><circle cx="430.2" cy="135.8" r="1.6" fill="#0cc6fc"/><circle cx="418.0" cy="151.1" r="1.6" fill="#0cc6fc"/><circle cx="434.0" cy="149.0" r="1.6" fill="#0cc6fc"/><circle cx="418.0" cy="157.7" r="1.6" fill="#0cc6fc"/><circle cx="418.0" cy="164.2" r="1.6" fill="#0cc6fc"/><circle cx="418.0" cy="165.5" r="1.6" fill="#0cc6fc"/><circle cx="418.0" cy="170.4" r="1.6" fill="#0cc6fc"/><circle cx="418.0" cy="173.0" r="1.6" fill="#0cc6fc"/><circle cx="419.2" cy="166.2" r="1.6" fill="#0cc6fc"/><circle cx="312.0" cy="150.0" r="1.6" fill="#0cc6fc"/><circle cx="312.0" cy="154.5" r="1.6" fill="#0cc6fc"/><circle cx="312.0" cy="159.0" r="1.6" fill="#0cc6fc"/><circle cx="316.5" cy="150.0" r="1.6" fill="#0cc6fc"/><circle cx="316.5" cy="154.5" r="1.6" fill="#0cc6fc"/><circle cx="316.5" cy="159.0" r="1.6" fill="#0cc6fc"/><circle cx="321.0" cy="150.0" r="1.6" fill="#0cc6fc"/><circle cx="321.0" cy="154.5" r="1.6" fill="#0cc6fc"/><circle cx="321.0" cy="159.0" r="1.6" fill="#0cc6fc"/><circle cx="325.5" cy="150.0" r="1.6" fill="#0cc6fc"/><circle cx="325.5" cy="154.5" r="1.6" fill="#0cc6fc"/><circle cx="325.5" cy="159.0" r="1.6" fill="#0cc6fc"/><circle cx="322.0" cy="166.0" r="1.6" fill="#0cc6fc"/><circle cx="322.0" cy="170.5" r="1.6" fill="#0cc6fc"/><circle cx="326.5" cy="166.0" r="1.6" fill="#0cc6fc"/><circle cx="326.5" cy="170.5" r="1.6" fill="#0cc6fc"/><circle cx="331.0" cy="166.0" r="1.6" fill="#0cc6fc"/><circle cx="331.0" cy="170.5" r="1.6" fill="#0cc6fc"/><circle cx="338.0" cy="180.0" r="1.6" fill="#0cc6fc"/><circle cx="342.5" cy="180.0" r="1.6" fill="#0cc6fc"/><circle cx="347.0" cy="180.0" r="1.6" fill="#0cc6fc"/><circle cx="347.0" cy="184.5" r="1.6" fill="#0cc6fc"/><circle cx="351.5" cy="180.0" r="1.6" fill="#0cc6fc"/><circle cx="351.5" cy="184.5" r="1.6" fill="#0cc6fc"/><circle cx="356.0" cy="180.0" r="1.6" fill="#0cc6fc"/><circle cx="356.0" cy="184.5" r="1.6" fill="#0cc6fc"/><circle cx="360.5" cy="180.0" r="1.6" fill="#0cc6fc"/><circle cx="360.5" cy="184.5" r="1.6" fill="#0cc6fc"/><circle cx="366.0" cy="182.0" r="1.6" fill="#0cc6fc"/><circle cx="366.0" cy="186.5" r="1.6" fill="#0cc6fc"/><circle cx="370.5" cy="182.0" r="1.6" fill="#0cc6fc"/><circle cx="370.5" cy="186.5" r="1.6" fill="#0cc6fc"/><circle cx="375.0" cy="182.0" r="1.6" fill="#0cc6fc"/><circle cx="375.0" cy="186.5" r="1.6" fill="#0cc6fc"/><circle cx="379.5" cy="182.0" r="1.6" fill="#0cc6fc"/><circle cx="379.5" cy="186.5" r="1.6" fill="#0cc6fc"/><circle cx="384.0" cy="182.0" r="1.6" fill="#0cc6fc"/><circle cx="384.0" cy="186.5" r="1.6" fill="#0cc6fc"/><circle cx="392.0" cy="180.0" r="1.6" fill="#0cc6fc"/><circle cx="392.0" cy="184.5" r="1.6" fill="#0cc6fc"/><circle cx="396.5" cy="180.0" r="1.6" fill="#0cc6fc"/><circle cx="396.5" cy="184.5" r="1.6" fill="#0cc6fc"/><circle cx="401.0" cy="180.0" r="1.6" fill="#0cc6fc"/><circle cx="401.0" cy="184.5" r="1.6" fill="#0cc6fc"/><circle cx="405.5" cy="180.0" r="1.6" fill="#0cc6fc"/><circle cx="405.5" cy="184.5" r="1.6" fill="#0cc6fc"/><circle cx="410.0" cy="180.0" r="1.6" fill="#0cc6fc"/><circle cx="414.5" cy="180.0" r="1.6" fill="#0cc6fc"/><circle cx="420.0" cy="160.0" r="1.6" fill="#0cc6fc"/><circle cx="420.0" cy="164.5" r="1.6" fill="#0cc6fc"/><circle cx="420.0" cy="169.0" r="1.6" fill="#0cc6fc"/><circle cx="424.5" cy="160.0" r="1.6" fill="#0cc6fc"/><circle cx="424.5" cy="164.5" r="1.6" fill="#0cc6fc"/><circle cx="424.5" cy="169.0" r="1.6" fill="#0cc6fc"/><circle cx="429.0" cy="160.0" r="1.6" fill="#0cc6fc"/><circle cx="429.0" cy="164.5" r="1.6" fill="#0cc6fc"/><circle cx="429.0" cy="169.0" r="1.6" fill="#0cc6fc"/><circle cx="433.5" cy="160.0" r="1.6" fill="#0cc6fc"/><circle cx="433.5" cy="164.5" r="1.6" fill="#0cc6fc"/><circle cx="433.5" cy="169.0" r="1.6" fill="#0cc6fc"/><circle cx="424.0" cy="118.0" r="1.6" fill="#0cc6fc"/><circle cx="424.0" cy="122.5" r="1.6" fill="#0cc6fc"/><circle cx="424.0" cy="127.0" r="1.6" fill="#0cc6fc"/><circle cx="424.0" cy="131.5" r="1.6" fill="#0cc6fc"/><circle cx="428.5" cy="118.0" r="1.6" fill="#0cc6fc"/><circle cx="428.5" cy="122.5" r="1.6" fill="#0cc6fc"/><circle cx="428.5" cy="127.0" r="1.6" fill="#0cc6fc"/><circle cx="428.5" cy="131.5" r="1.6" fill="#0cc6fc"/><circle cx="433.0" cy="118.0" r="1.6" fill="#0cc6fc"/><circle cx="433.0" cy="122.5" r="1.6" fill="#0cc6fc"/><circle cx="433.0" cy="127.0" r="1.6" fill="#0cc6fc"/><circle cx="433.0" cy="131.5" r="1.6" fill="#0cc6fc"/><circle cx="428.0" cy="96.0" r="1.6" fill="#0cc6fc"/><circle cx="428.0" cy="100.5" r="1.6" fill="#0cc6fc"/><circle cx="428.0" cy="105.0" r="1.6" fill="#0cc6fc"/><circle cx="432.5" cy="96.0" r="1.6" fill="#0cc6fc"/><circle cx="432.5" cy="100.5" r="1.6" fill="#0cc6fc"/><circle cx="432.5" cy="105.0" r="1.6" fill="#0cc6fc"/><circle cx="437.0" cy="96.0" r="1.6" fill="#0cc6fc"/><circle cx="437.0" cy="100.5" r="1.6" fill="#0cc6fc"/><circle cx="437.0" cy="105.0" r="1.6" fill="#0cc6fc"/><circle cx="316.0" cy="104.0" r="1.6" fill="#0cc6fc"/><circle cx="316.0" cy="108.5" r="1.6" fill="#0cc6fc"/><circle cx="316.0" cy="113.0" r="1.6" fill="#0cc6fc"/><circle cx="316.0" cy="117.5" r="1.6" fill="#0cc6fc"/><circle cx="320.5" cy="104.0" r="1.6" fill="#0cc6fc"/><circle cx="320.5" cy="108.5" r="1.6" fill="#0cc6fc"/><circle cx="320.5" cy="113.0" r="1.6" fill="#0cc6fc"/><circle cx="320.5" cy="117.5" r="1.6" fill="#0cc6fc"/><circle cx="325.0" cy="104.0" r="1.6" fill="#0cc6fc"/><circle cx="325.0" cy="108.5" r="1.6" fill="#0cc6fc"/><circle cx="325.0" cy="113.0" r="1.6" fill="#0cc6fc"/><circle cx="325.0" cy="117.5" r="1.6" fill="#0cc6fc"/><circle cx="322.0" cy="86.0" r="1.6" fill="#0cc6fc"/><circle cx="322.0" cy="90.5" r="1.6" fill="#0cc6fc"/><circle cx="326.5" cy="86.0" r="1.6" fill="#0cc6fc"/><circle cx="326.5" cy="90.5" r="1.6" fill="#0cc6fc"/><circle cx="331.0" cy="86.0" r="1.6" fill="#0cc6fc"/><circle cx="331.0" cy="90.5" r="1.6" fill="#0cc6fc"/><circle cx="352.0" cy="88.0" r="1.6" fill="#0cc6fc"/><circle cx="356.5" cy="88.0" r="1.6" fill="#0cc6fc"/><circle cx="361.0" cy="88.0" r="1.6" fill="#0cc6fc"/><circle cx="365.5" cy="88.0" r="1.6" fill="#0cc6fc"/><circle cx="370.0" cy="88.0" r="1.6" fill="#0cc6fc"/><circle cx="396.0" cy="86.0" r="1.6" fill="#0cc6fc"/><circle cx="400.5" cy="86.0" r="1.6" fill="#0cc6fc"/><circle cx="405.0" cy="86.0" r="1.6" fill="#0cc6fc"/><circle cx="409.5" cy="86.0" r="1.6" fill="#0cc6fc"/><circle cx="310.0" cy="128.0" r="1.6" fill="#0cc6fc"/><circle cx="310.0" cy="132.5" r="1.6" fill="#0cc6fc"/><circle cx="310.0" cy="137.0" r="1.6" fill="#0cc6fc"/><circle cx="314.5" cy="128.0" r="1.6" fill="#0cc6fc"/><circle cx="314.5" cy="132.5" r="1.6" fill="#0cc6fc"/><circle cx="314.5" cy="137.0" r="1.6" fill="#0cc6fc"/><circle cx="319.0" cy="128.0" r="1.6" fill="#0cc6fc"/><circle cx="319.0" cy="132.5" r="1.6" fill="#0cc6fc"/><circle cx="319.0" cy="137.0" r="1.6" fill="#0cc6fc"/><circle cx="436.0" cy="128.0" r="1.6" fill="#0cc6fc"/><circle cx="436.0" cy="132.5" r="1.6" fill="#0cc6fc"/><circle cx="436.0" cy="137.0" r="1.6" fill="#0cc6fc"/><circle cx="440.5" cy="128.0" r="1.6" fill="#0cc6fc"/><circle cx="440.5" cy="132.5" r="1.6" fill="#0cc6fc"/><circle cx="440.5" cy="137.0" r="1.6" fill="#0cc6fc"/></g><ellipse cx="376.2" cy="123.5" rx="80.6" ry="69.8" fill="none" stroke="#0cc6fc" stroke-width="1.3"/>
</g>
</symbol></svg>
<div id="app" style="position:absolute;left:0;top:0;width:781px;height:420px">
<div class="a" style="left:0.00px;top:0.00px;width:781.00px;height:1.00px;background:#e3ebfc;"></div>
<div class="a" style="left:0.00px;top:0.00px;width:1.00px;height:420.00px;background:#e3ebfc;"></div>
<div class="a" style="left:3.80px;top:84.00px;width:777.20px;height:327.00px;background:#e6e6e6;"></div><div class="a" style="left:127.20px;top:84.40px;width:1.00px;height:326.00px;background:#d2d2d2;"></div><div class="a" style="left:128.20px;top:391.00px;width:653.00px;height:0.90px;background:#d2d2d2;"></div><div class="t " style="left:133.00px;top:397.00px;font-size:7.5px;letter-spacing:-0.034px;color:#555">Click to add notes</div><div class="a" style="left:776.40px;top:84.50px;width:4.60px;height:272.00px;background:#dcdcdc;"></div><div class="a" style="left:776.40px;top:85.50px;width:4.60px;height:7.50px;background:#fbfbfb;"></div><div class="a" style="left:776.40px;top:94.00px;width:4.60px;height:63.00px;background:#fdfdfd;"></div><svg style="left:776.90px;top:87.60px" width="4" height="3.5" viewBox="0 0 4 3.5" ><path d="M0.3,3 L2,0.6 L3.700,3 Z" fill="#555"/></svg><div class="a" style="left:776.40px;top:356.30px;width:4.60px;height:7.00px;background:#fbfbfb;"></div><svg style="left:776.90px;top:358.30px" width="4" height="3.5" viewBox="0 0 4 3.5" ><path d="M0.3,0.5 L2,2.900 L3.700,0.5 Z" fill="#444"/></svg><svg style="left:776.70px;top:366.20px" width="4.3" height="14" viewBox="0 0 4.3 14" ><path d="M0.4,2.400 L2.150,0.6 L3.900,2.400 M0.4,4.600 L2.150,2.800 L3.900,4.600" fill="none" stroke="#555" stroke-width="0.8"/><path d="M0.4,8.800 L2.150,10.600 L3.900,8.800 M0.4,11 L2.150,12.800 L3.900,11" fill="none" stroke="#555" stroke-width="0.8"/></svg>
<div class="a" style="left:3.80px;top:2.90px;width:777.20px;height:17.80px;background:#b7472a;"></div><div class="t w" style="left:15.50px;top:9.00px;font-size:6.3px;letter-spacing:-0.290px;">AutoSave</div><div class="a" style="left:44px;top:7.7px;width:19.2px;height:8px;border:0.9px solid #fff;border-radius:5px;box-sizing:border-box"></div><div class="a" style="left:46.60px;top:9.80px;width:3.80px;height:3.80px;background:#fff;border-radius:2px"></div><div class="t w" style="left:53.50px;top:10.00px;font-size:5.0px;letter-spacing:-0.040px;font-weight:bold;">Off</div><svg style="left:70.00px;top:7.50px" width="10" height="10" viewBox="0 0 10 10" ><path d="M0.8,0.8 H7.500 L9.200,2.500 V9.200 H0.8 Z" fill="none" stroke="#fff" stroke-width="1"/><path d="M2.800,0.8 V3.500 H7 V0.8 M2.800,9.200 V5.800 H7.200 V9.200" fill="none" stroke="#fff" stroke-width="0.9"/></svg><svg style="left:86.00px;top:7.50px" width="10" height="10" viewBox="0 0 10 10" ><path d="M1,1.200 V4.800 H4.600 M1.300,4.500 C3,1.500 7.500,1.500 8,5 C8.200,7 6.500,8.500 4.500,9" fill="none" stroke="#d68f7c" stroke-width="1"/></svg><svg style="left:96.30px;top:10.30px" width="4" height="3" viewBox="0 0 4 3" ><path d="M0.5,0.6 L2,2.200 L3.500,0.6" fill="none" stroke="#d68f7c" stroke-width="0.7"/></svg><svg style="left:104.80px;top:7.50px" width="10" height="10" viewBox="0 0 10 10" ><path d="M6.300,1.600 A3.900,3.900 0 1 1 2.300,2.500 M6.500,0 V2.300 H4.300" fill="none" stroke="#d68f7c" stroke-width="1"/></svg><svg style="left:120.50px;top:7.80px" width="9" height="10" viewBox="0 0 9 10" ><path d="M0.5,0.8 H8.500 M1.300,0.8 V5.600 H7.700 V0.8 M4.500,5.600 V8.600 M2.500,9 H6.500 M4.500,2 V4.300 M3.300,3 L4.500,1.900 L5.700,3" fill="none" stroke="#fff" stroke-width="0.9"/></svg><svg style="left:137.60px;top:10.30px" width="5" height="5" viewBox="0 0 5 5" ><path d="M0.6,0.7 H4" stroke="#fff" stroke-width="0.8"/><path d="M0.5,2 L2.300,3.900 L4.100,2 Z" fill="#fff"/></svg><div class="t w" style="left:299.40px;top:9.00px;font-size:6.3px;letter-spacing:-0.030px;">160495-artificial-intelligence-template-16x9.pptx</div><div class="t w" style="left:434.20px;top:9.00px;font-size:6.3px;letter-spacing:0.302px;">-</div><div class="t w" style="left:439.80px;top:9.00px;font-size:6.3px;letter-spacing:-0.233px;">Saved to this PC</div><div class="a" style="left:645.40px;top:7.30px;width:27.50px;height:9.00px;background:#fff;"></div><div class="t " style="left:650.20px;top:9.00px;font-size:6.3px;letter-spacing:-0.209px;color:#b7472a">Sign in</div><svg style="left:679.50px;top:7.80px" width="9" height="9" viewBox="0 0 9 9" ><path d="M1.300,7.800 L2,5.500 L6.300,1 L8,2.600 L3.600,7.100 Z M6,1.300 L7.500,0.3" fill="none" stroke="#fff" stroke-width="0.85"/></svg><svg style="left:698.40px;top:8.40px" width="8" height="7" viewBox="0 0 8 7" ><rect x="0.5" y="0.5" width="7" height="5.800" fill="none" stroke="#fff" stroke-width="0.9"/><path d="M0.5,2.200 H7.500 M4,5.300 V3.300 M3,4.200 L4,3.200 L5,4.200" fill="none" stroke="#fff" stroke-width="0.7"/></svg><div class="a" style="left:723.20px;top:11.70px;width:5.80px;height:0.90px;background:#fff;"></div><svg style="left:746.00px;top:8.60px" width="7" height="7" viewBox="0 0 7 7" ><rect x="0.5" y="1.800" width="4.600" height="4.600" rx="0.6" fill="none" stroke="#fff" stroke-width="0.85"/><path d="M2,1.800 V0.5 H6.400 V5 H5.100" fill="none" stroke="#fff" stroke-width="0.85"/></svg><svg style="left:769.40px;top:9.00px" width="6" height="6" viewBox="0 0 6 6" ><path d="M0.4,0.4 L5.600,5.600 M5.600,0.4 L0.4,5.600" stroke="#fff" stroke-width="0.85"/></svg>
<div class="a" style="left:3.80px;top:20.20px;width:777.20px;height:17.00px;background:#f3f2f1;"></div><div class="t " style="left:12.70px;top:26.00px;font-size:6.8px;letter-spacing:-0.214px;">File</div><div class="t " style="left:67.50px;top:26.00px;font-size:6.8px;letter-spacing:0.032px;">Insert</div><div class="t " style="left:96.10px;top:26.00px;font-size:6.8px;letter-spacing:-0.045px;">Design</div><div class="t " style="left:128.00px;top:26.00px;font-size:6.8px;letter-spacing:-0.010px;">Transitions</div><div class="t " style="left:172.20px;top:26.00px;font-size:6.8px;letter-spacing:0.096px;">Animations</div><div class="t " style="left:218.00px;top:26.00px;font-size:6.8px;letter-spacing:-0.082px;">Slide Show</div><div class="t " style="left:263.00px;top:26.00px;font-size:6.8px;letter-spacing:-0.183px;">Review</div><div class="t " style="left:296.00px;top:26.00px;font-size:6.8px;letter-spacing:-0.029px;">View</div><div class="t " style="left:322.00px;top:26.00px;font-size:6.8px;letter-spacing:-0.033px;">Developer</div><div class="t " style="left:364.80px;top:26.00px;font-size:6.8px;letter-spacing:-0.121px;">Help</div><div class="t " style="left:390.00px;top:26.00px;font-size:6.8px;letter-spacing:-0.095px;">Tools</div><div class="t " style="left:416.90px;top:26.00px;font-size:6.8px;letter-spacing:-0.845px;">FPPT</div><div class="t " style="left:443.00px;top:26.00px;font-size:6.8px;letter-spacing:-0.745px;">FPPT</div><div class="t " style="left:469.30px;top:26.00px;font-size:6.8px;letter-spacing:0.067px;">Watermark</div><div class="t " style="left:534.00px;top:26.00px;font-size:6.8px;letter-spacing:-0.158px;">Search</div><div class="t " style="left:37.60px;top:26.00px;font-size:6.8px;letter-spacing:-0.023px;font-weight:bold;color:#333">Home</div><div class="a" style="left:37.60px;top:33.70px;width:18.80px;height:1.30px;background:#b7472a;"></div><svg style="left:520.50px;top:23.80px" width="8" height="9" viewBox="0 0 8 9" ><circle cx="4.900" cy="3.300" r="2.500" fill="none" stroke="#555" stroke-width="0.8"/><path d="M3.100,5.100 L0.5,8" stroke="#555" stroke-width="0.9"/></svg><div class="a" style="left:688.60px;top:22.00px;width:33.60px;height:12.20px;background:#fff;border-radius:1px"></div><svg style="left:692.30px;top:24.60px" width="7" height="8" viewBox="0 0 7 8" ><path d="M0.5,3.200 V7.300 H5.500 V5 M2.500,4.800 C2.500,2.800 4,2.200 5.300,2.200 M4.300,0.7 L5.900,2.200 L4.300,3.700" fill="none" stroke="#b7472a" stroke-width="0.75"/></svg><div class="t " style="left:701.00px;top:26.00px;font-size:6.8px;letter-spacing:-0.300px;font-weight:bold;color:#b7472a">Share</div><div class="a" style="left:727.60px;top:22.00px;width:49.70px;height:12.20px;background:#fff;border-radius:1px"></div><svg style="left:731.00px;top:25.00px" width="7" height="7" viewBox="0 0 7 7" ><path d="M0.5,0.5 H6.200 V4.300 H3 L1.600,5.900 V4.300 H0.5 Z" fill="none" stroke="#b7472a" stroke-width="0.75"/></svg><div class="t " style="left:739.50px;top:26.00px;font-size:6.8px;letter-spacing:-0.205px;font-weight:bold;color:#b7472a">Comments</div>
<div class="a" style="left:3.80px;top:36.00px;width:777.20px;height:48.30px;background:#f3f2f1;"></div><div class="a" style="left:3.80px;top:84.20px;width:777.20px;height:1.10px;background:#d0cfce;"></div><div class="a" style="left:3.80px;top:85.30px;width:777.20px;height:1.20px;background:#e1e1e1;"></div><svg style="left:12.00px;top:40.00px" width="15" height="16" viewBox="0 0 15 16" ><rect x="0.8" y="2.500" width="9.500" height="12" rx="0.8" fill="#fff" stroke="#e8a33a" stroke-width="1.2"/><rect x="3.200" y="0.7" width="4.600" height="3" rx="0.6" fill="#f3f2f1" stroke="#777" stroke-width="0.8"/><rect x="6.800" y="6.300" width="7.200" height="9" fill="#fff" stroke="#666" stroke-width="0.95"/></svg><div class="t " style="left:11.70px;top:57.00px;font-size:6.0px;letter-spacing:-0.389px;">Paste</div><svg style="left:15.90px;top:65.90px" width="5" height="4" viewBox="0 0 5 4" ><path d="M0.90,1.1 L2.5,2.9 L4.10,1.1" fill="none" stroke="#555" stroke-width="0.75"/></svg><svg style="left:31.50px;top:40.50px" width="6" height="8" viewBox="0 0 6 8" ><path d="M1.300,0.3 L4.200,5.300 M4.700,0.3 L1.800,5.300" stroke="#a6a6a6" stroke-width="0.7"/><circle cx="1.500" cy="6.300" r="1" fill="none" stroke="#a6a6a6" stroke-width="0.6"/><circle cx="4.500" cy="6.300" r="1" fill="none" stroke="#a6a6a6" stroke-width="0.6"/></svg><div class="t g" style="left:40.10px;top:42.00px;font-size:6.0px;letter-spacing:-0.412px;">Cut</div><svg style="left:30.30px;top:51.80px" width="8" height="8" viewBox="0 0 8 8" ><path d="M0.5,0.5 H3.500 L4.800,1.800 V6 H0.5 Z" fill="none" stroke="#a6a6a6" stroke-width="0.7"/><path d="M2.800,2.200 H6 L7.300,3.500 V7.600 H2.800 Z" fill="#f3f2f1" stroke="#a6a6a6" stroke-width="0.7"/></svg><div class="t g" style="left:40.10px;top:53.00px;font-size:6.0px;letter-spacing:-0.277px;">Copy</div><svg style="left:56.70px;top:54.20px" width="5" height="4" viewBox="0 0 5 4" ><path d="M0.90,1.1 L2.5,2.9 L4.10,1.1" fill="none" stroke="#a6a6a6" stroke-width="0.75"/></svg><svg style="left:30.50px;top:63.80px" width="8" height="8" viewBox="0 0 8 8" ><path d="M0.8,5.500 L3.300,3 L5,4.700 L2.500,7.300 Z M3.800,2.600 L6,0.6 L7.300,1.800 L5.300,4" fill="none" stroke="#a6a6a6" stroke-width="0.7"/></svg><div class="t g" style="left:40.10px;top:65.00px;font-size:6.0px;letter-spacing:-0.134px;">Format Painter</div><div class="t " style="left:29.00px;top:78.00px;font-size:5.5px;letter-spacing:-0.060px;color:#555">Clipboard</div><svg style="left:79.50px;top:78.60px" width="4" height="4" viewBox="0 0 4 4" ><path d="M0.4,2 V0.4 H2 M1.5,1.500 L3.5,3.500 M3.600,1.800 V3.600 H1.800" fill="none" stroke="#999" stroke-width="0.6"/></svg><div class="sep" style="left:85.4px;top:38.5px;height:43.5px"></div><svg style="left:92.40px;top:39.30px" width="16" height="15.5" viewBox="0 0 16 15.5" ><rect x="2.300" y="3.200" width="12.700" height="11.300" fill="#fff" stroke="#808080" stroke-width="1.5"/><path d="M2.300,7.600 H15 M7.600,7.600 V14.500" stroke="#808080" stroke-width="1.2"/><path d="M3.600,0 V6.300 M0.3,3.200 H6.800" stroke="#3fa35c" stroke-width="1"/></svg><div class="t " style="left:95.20px;top:57.00px;font-size:6.0px;letter-spacing:-0.168px;">New</div><div class="t " style="left:90.80px;top:66.00px;font-size:6.0px;letter-spacing:-0.048px;">Slide</div><svg style="left:104.80px;top:66.30px" width="5" height="4" viewBox="0 0 5 4" ><path d="M0.90,1.1 L2.5,2.9 L4.10,1.1" fill="none" stroke="#555" stroke-width="0.75"/></svg><svg style="left:112.30px;top:40.40px" width="9" height="7.2" viewBox="0 0 9 7.2" ><rect x="0.65" y="0.65" width="7.700" height="5.900" fill="#fff" stroke="#777" stroke-width="1.3"/><rect x="2" y="2.100" width="2.100" height="3" fill="#555"/><rect x="4.900" y="2.100" width="2.100" height="3" fill="#555"/></svg><div class="t " style="left:122.00px;top:42.00px;font-size:6.0px;letter-spacing:-0.019px;">Layout</div><svg style="left:140.70px;top:42.50px" width="5" height="4" viewBox="0 0 5 4" ><path d="M0.90,1.1 L2.5,2.9 L4.10,1.1" fill="none" stroke="#555" stroke-width="0.75"/></svg><svg style="left:112.30px;top:51.60px" width="9" height="7.8" viewBox="0 0 9 7.8" ><rect x="0.65" y="1.700" width="7.700" height="5.500" fill="#fff" stroke="#777" stroke-width="1.3"/><path d="M1.400,6.500 L3.300,4.200 L4.700,5.600 L5.700,4.800 L7.600,6.500 Z" fill="#8a8a8a"/><path d="M0.8,2.600 C1,0.6 3.500,0.3 4.500,1.600 M4.700,0 V1.800 H3" fill="none" stroke="#2f7fd6" stroke-width="0.75"/></svg><div class="t " style="left:122.00px;top:53.00px;font-size:6.0px;letter-spacing:-0.235px;">Reset</div><svg style="left:112.30px;top:63.30px" width="9" height="8.6" viewBox="0 0 9 8.6" ><path d="M0.3,0.8 H8.700" stroke="#3fa35c" stroke-width="1.1"/><rect x="0.65" y="2.700" width="7.700" height="5.300" fill="#fff" stroke="#777" stroke-width="1.3"/><rect x="0.5" y="2.600" width="8" height="1.700" fill="#666"/></svg><div class="t " style="left:122.00px;top:65.00px;font-size:6.0px;letter-spacing:-0.016px;">Section</div><svg style="left:143.10px;top:66.30px" width="5" height="4" viewBox="0 0 5 4" ><path d="M0.90,1.1 L2.5,2.9 L4.10,1.1" fill="none" stroke="#555" stroke-width="0.75"/></svg><div class="t " style="left:113.10px;top:78.00px;font-size:5.5px;letter-spacing:-0.197px;color:#555">Slides</div><div class="sep" style="left:154.4px;top:38.5px;height:43.5px"></div><div class="a" style="left:159.2px;top:42.7px;width:73.4px;height:10.6px;background:#fff;border:0.8px solid #d4d4d4;box-sizing:border-box"></div><div class="a" style="left:233.5px;top:42.7px;width:21.7px;height:10.6px;background:#fff;border:0.8px solid #d4d4d4;box-sizing:border-box"></div><svg style="left:226.60px;top:46.30px" width="5" height="4" viewBox="0 0 5 4" ><path d="M0.90,1.1 L2.5,2.9 L4.10,1.1" fill="none" stroke="#a6a6a6" stroke-width="0.75"/></svg><svg style="left:249.30px;top:46.30px" width="5" height="4" viewBox="0 0 5 4" ><path d="M0.90,1.1 L2.5,2.9 L4.10,1.1" fill="none" stroke="#a6a6a6" stroke-width="0.75"/></svg><div class="t g" style="left:259.00px;top:45.00px;font-size:7.0px;letter-spacing:-0.269px;">A</div><svg style="left:263.20px;top:44.30px" width="3" height="3" viewBox="0 0 3 3" ><path d="M0.3,2 L1.500,0.6 L2.700,2" fill="none" stroke="#a6a6a6" stroke-width="0.55"/></svg><div class="t g" style="left:270.60px;top:46.00px;font-size:6.2px;letter-spacing:-0.336px;">A</div><svg style="left:274.00px;top:44.60px" width="3" height="3" viewBox="0 0 3 3" ><path d="M0.3,0.8 L1.500,2.200 L2.700,0.8" fill="none" stroke="#a6a6a6" stroke-width="0.55"/></svg><div class="sep" style="left:280.4px;top:42.5px;height:11px;background:#ddd"></div><div class="t g" style="left:284.00px;top:45.00px;font-size:7.4px;letter-spacing:0.064px;">A</div><svg style="left:288.00px;top:46.80px" width="5" height="5" viewBox="0 0 5 5" ><path d="M0.8,4 L2.800,0.8 L4.300,1.900 L2.400,4.500 Z" fill="#f3f2f1" stroke="#a6a6a6" stroke-width="0.6"/></svg><div class="t g" style="left:162.60px;top:62.00px;font-size:6.8px;letter-spacing:-0.511px;font-weight:bold;">B</div><div class="t g" style="left:174.4px;top:61.80px;font-size:7.4px;font-style:italic;font-family:'Liberation Serif',serif">I</div><div class="t g" style="left:185.00px;top:62.00px;font-size:6.6px;letter-spacing:-0.166px;">U</div><div class="a" style="left:184.80px;top:67.60px;width:4.80px;height:0.60px;background:#a6a6a6;"></div><div class="t g" style="left:196.00px;top:62.00px;font-size:6.8px;letter-spacing:-0.136px;">S</div><div class="t g" style="left:206.00px;top:62.00px;font-size:5.4px;letter-spacing:0.697px;">ab</div><div class="a" style="left:205.60px;top:64.40px;width:8.20px;height:0.55px;background:#a6a6a6;"></div><div class="t g" style="left:217.60px;top:60.00px;font-size:5.2px;letter-spacing:0.874px;">AV</div><svg style="left:217.60px;top:65.10px" width="8.4" height="3" viewBox="0 0 8.4 3" ><path d="M0.4,1.500 H8 M1.500,0.4 L0.4,1.500 L1.500,2.600 M6.900,0.4 L8,1.500 L6.900,2.600" fill="none" stroke="#a6a6a6" stroke-width="0.5"/></svg><svg style="left:225.90px;top:62.20px" width="5" height="4" viewBox="0 0 5 4" ><path d="M0.90,1.1 L2.5,2.9 L4.10,1.1" fill="none" stroke="#a6a6a6" stroke-width="0.75"/></svg><div class="t g" style="left:235.50px;top:62.00px;font-size:6.2px;letter-spacing:0.508px;">Aa</div><svg style="left:244.30px;top:62.20px" width="5" height="4" viewBox="0 0 5 4" ><path d="M0.90,1.1 L2.5,2.9 L4.10,1.1" fill="none" stroke="#a6a6a6" stroke-width="0.75"/></svg><div class="sep" style="left:253.1px;top:58.5px;height:11px;background:#ddd"></div><svg style="left:257.30px;top:59.30px" width="8.5" height="10" viewBox="0 0 8.5 10" ><path d="M1.800,6.300 L5.600,1.200 L7.300,2.500 L3.600,7.500 L1.500,7.700 Z" fill="none" stroke="#a6a6a6" stroke-width="0.7"/><rect x="0.3" y="8.400" width="7.900" height="1.200" fill="#a6a6a6"/></svg><svg style="left:267.50px;top:62.20px" width="5" height="4" viewBox="0 0 5 4" ><path d="M0.90,1.1 L2.5,2.9 L4.10,1.1" fill="none" stroke="#a6a6a6" stroke-width="0.75"/></svg><div class="t g" style="left:277.30px;top:61.00px;font-size:6.8px;letter-spacing:0.864px;">A</div><div class="a" style="left:276.40px;top:66.90px;width:7.10px;height:1.20px;background:#a6a6a6;"></div><svg style="left:286.70px;top:62.20px" width="5" height="4" viewBox="0 0 5 4" ><path d="M0.90,1.1 L2.5,2.9 L4.10,1.1" fill="none" stroke="#a6a6a6" stroke-width="0.75"/></svg><div class="t " style="left:216.80px;top:78.00px;font-size:5.5px;letter-spacing:-0.251px;color:#555">Font</div><svg style="left:291.20px;top:78.60px" width="4" height="4" viewBox="0 0 4 4" ><path d="M0.4,2 V0.4 H2 M1.5,1.500 L3.5,3.500 M3.600,1.800 V3.600 H1.800" fill="none" stroke="#bbb" stroke-width="0.6"/></svg><div class="sep" style="left:297.2px;top:38.5px;height:43.5px"></div><div class="a" style="left:303.00px;top:44.30px;width:1.10px;height:1.10px;background:#a6a6a6;"></div><div class="a" style="left:305.40px;top:44.45px;width:5.60px;height:0.80px;background:#a6a6a6;"></div><div class="a" style="left:303.00px;top:47.20px;width:1.10px;height:1.10px;background:#a6a6a6;"></div><div class="a" style="left:305.40px;top:47.35px;width:5.60px;height:0.80px;background:#a6a6a6;"></div><div class="a" style="left:303.00px;top:50.10px;width:1.10px;height:1.10px;background:#a6a6a6;"></div><div class="a" style="left:305.40px;top:50.25px;width:5.60px;height:0.80px;background:#a6a6a6;"></div><svg style="left:313.80px;top:46.30px" width="5" height="4" viewBox="0 0 5 4" ><path d="M0.90,1.1 L2.5,2.9 L4.10,1.1" fill="none" stroke="#a6a6a6" stroke-width="0.75"/></svg><div class="a" style="left:322.30px;top:44.30px;width:1.10px;height:1.10px;background:#a6a6a6;"></div><div class="a" style="left:324.70px;top:44.45px;width:5.60px;height:0.80px;background:#a6a6a6;"></div><div class="a" style="left:322.30px;top:47.20px;width:1.10px;height:1.10px;background:#a6a6a6;"></div><div class="a" style="left:324.70px;top:47.35px;width:5.60px;height:0.80px;background:#a6a6a6;"></div><div class="a" style="left:322.30px;top:50.10px;width:1.10px;height:1.10px;background:#a6a6a6;"></div><div class="a" style="left:324.70px;top:50.25px;width:5.60px;height:0.80px;background:#a6a6a6;"></div><svg style="left:333.00px;top:46.30px" width="5" height="4" viewBox="0 0 5 4" ><path d="M0.90,1.1 L2.5,2.9 L4.10,1.1" fill="none" stroke="#a6a6a6" stroke-width="0.75"/></svg><div class="sep" style="left:341.3px;top:42.5px;height:11px;background:#ddd"></div><div class="a" style="left:345.30px;top:44.40px;width:7.60px;height:0.80px;background:#a6a6a6;"></div><div class="a" style="left:348.30px;top:46.60px;width:4.60px;height:0.80px;background:#a6a6a6;"></div><div class="a" style="left:348.30px;top:48.80px;width:4.60px;height:0.80px;background:#a6a6a6;"></div><div class="a" style="left:345.30px;top:51.00px;width:7.60px;height:0.80px;background:#a6a6a6;"></div><svg style="left:345.30px;top:45.80px" width="3" height="3.4" viewBox="0 0 3 3.4" ><path d="M2.500,0.3 L0.6,1.700 L2.500,3.100 Z" fill="#a6a6a6"/></svg><div class="a" style="left:356.80px;top:44.40px;width:7.60px;height:0.80px;background:#a6a6a6;"></div><div class="a" style="left:359.80px;top:46.60px;width:4.60px;height:0.80px;background:#a6a6a6;"></div><div class="a" style="left:359.80px;top:48.80px;width:4.60px;height:0.80px;background:#a6a6a6;"></div><div class="a" style="left:356.80px;top:51.00px;width:7.60px;height:0.80px;background:#a6a6a6;"></div><svg style="left:356.80px;top:45.80px" width="3" height="3.4" viewBox="0 0 3 3.4" ><path d="M0.5,0.3 L2.400,1.700 L0.5,3.100 Z" fill="#a6a6a6"/></svg><div class="sep" style="left:367.6px;top:42.5px;height:11px;background:#ddd"></div><svg style="left:371.40px;top:43.60px" width="3" height="9" viewBox="0 0 3 9" ><path d="M1.500,0.4 V8.600 M0.4,1.600 L1.500,0.400 L2.600,1.600 M0.4,7.400 L1.500,8.600 L2.600,7.400" fill="none" stroke="#a6a6a6" stroke-width="0.6"/></svg><div class="a" style="left:375.00px;top:44.40px;width:5.00px;height:0.80px;background:#a6a6a6;"></div><div class="a" style="left:375.00px;top:46.60px;width:5.00px;height:0.80px;background:#a6a6a6;"></div><div class="a" style="left:375.00px;top:48.80px;width:5.00px;height:0.80px;background:#a6a6a6;"></div><div class="a" style="left:375.00px;top:51.00px;width:5.00px;height:0.80px;background:#a6a6a6;"></div><svg style="left:381.00px;top:46.30px" width="5" height="4" viewBox="0 0 5 4" ><path d="M0.90,1.1 L2.5,2.9 L4.10,1.1" fill="none" stroke="#a6a6a6" stroke-width="0.75"/></svg><div class="a" style="left:303.40px;top:60.00px;width:7.60px;height:0.80px;background:#a6a6a6;"></div><div class="a" style="left:303.40px;top:62.20px;width:5.20px;height:0.80px;background:#a6a6a6;"></div><div class="a" style="left:303.40px;top:64.40px;width:7.60px;height:0.80px;background:#a6a6a6;"></div><div class="a" style="left:303.40px;top:66.60px;width:5.20px;height:0.80px;background:#a6a6a6;"></div><div class="a" style="left:337.60px;top:60.00px;width:7.60px;height:0.80px;background:#a6a6a6;"></div><div class="a" style="left:337.60px;top:62.20px;width:7.60px;height:0.80px;background:#a6a6a6;"></div><div class="a" style="left:337.60px;top:64.40px;width:7.60px;height:0.80px;background:#a6a6a6;"></div><div class="a" style="left:337.60px;top:66.60px;width:7.60px;height:0.80px;background:#a6a6a6;"></div><div class="a" style="left:314.60px;top:60.00px;width:7.60px;height:0.80px;background:#a6a6a6;"></div><div class="a" style="left:315.80px;top:62.20px;width:5.20px;height:0.80px;background:#a6a6a6;"></div><div class="a" style="left:314.60px;top:64.40px;width:7.60px;height:0.80px;background:#a6a6a6;"></div><div class="a" style="left:315.80px;top:66.60px;width:5.20px;height:0.80px;background:#a6a6a6;"></div><div class="a" style="left:326.00px;top:60.00px;width:7.60px;height:0.80px;background:#a6a6a6;"></div><div class="a" style="left:328.40px;top:62.20px;width:5.20px;height:0.80px;background:#a6a6a6;"></div><div class="a" style="left:326.00px;top:64.40px;width:7.60px;height:0.80px;background:#a6a6a6;"></div><div class="a" style="left:328.40px;top:66.60px;width:5.20px;height:0.80px;background:#a6a6a6;"></div><div class="sep" style="left:349px;top:58.5px;height:11px;background:#ddd"></div><div class="a" style="left:353.40px;top:60.00px;width:2.20px;height:7.00px;background:#cfcfcf;"></div><div class="a" style="left:356.90px;top:60.00px;width:2.20px;height:7.00px;background:#cfcfcf;"></div><svg style="left:361.50px;top:62.20px" width="5" height="4" viewBox="0 0 5 4" ><path d="M0.90,1.1 L2.5,2.9 L4.10,1.1" fill="none" stroke="#a6a6a6" stroke-width="0.75"/></svg><svg style="left:389.80px;top:40.00px" width="8" height="9.5" viewBox="0 0 8 9.5" ><path d="M1.800,0.5 V8.500 M0.4,7 L1.800,8.700 L3.200,7 M5.500,0.5 V8.500 M4.100,2 L5.500,0.3 L6.900,2 M4.300,8.500 H6.700" fill="none" stroke="#a6a6a6" stroke-width="0.7"/></svg><div class="t g" style="left:398.90px;top:42.00px;font-size:6.0px;letter-spacing:0.054px;">Text Direction</div><svg style="left:437.00px;top:42.50px" width="5" height="4" viewBox="0 0 5 4" ><path d="M0.90,1.1 L2.5,2.9 L4.10,1.1" fill="none" stroke="#a6a6a6" stroke-width="0.75"/></svg><svg style="left:389.60px;top:51.80px" width="8.4" height="8.4" viewBox="0 0 8.4 8.4" ><path d="M0.4,2.300 V0.4 H2.300 M6.100,0.4 H8 V2.300 M8,6.100 V8 H6.100 M2.300,8 H0.4 V6.100 M2,4.200 H6.400 M4.200,1.800 V6.600 M3.300,2.700 L4.200,1.700 L5.100,2.700 M3.300,5.700 L4.200,6.700 L5.100,5.700" fill="none" stroke="#a6a6a6" stroke-width="0.65"/></svg><div class="t g" style="left:398.90px;top:53.00px;font-size:6.0px;letter-spacing:0.090px;">Align Text</div><svg style="left:426.30px;top:54.40px" width="5" height="4" viewBox="0 0 5 4" ><path d="M0.90,1.1 L2.5,2.9 L4.10,1.1" fill="none" stroke="#a6a6a6" stroke-width="0.75"/></svg><svg style="left:389.60px;top:63.60px" width="8.6" height="8.4" viewBox="0 0 8.6 8.4" ><path d="M0.3,1.200 H3.500 M1.900,1.200 V4.500 M2.500,2.500 L4,3.500" stroke="#a6a6a6" stroke-width="0.75" fill="none"/><rect x="3.600" y="3.400" width="4.600" height="4.600" fill="none" stroke="#a6a6a6" stroke-width="0.7"/><path d="M4.600,5 H7.300 M4.600,6.500 H7.300" stroke="#a6a6a6" stroke-width="0.55"/></svg><div class="t g" style="left:398.90px;top:65.00px;font-size:6.0px;letter-spacing:0.010px;">Convert to SmartArt</div><svg style="left:453.00px;top:66.30px" width="5" height="4" viewBox="0 0 5 4" ><path d="M0.90,1.1 L2.5,2.9 L4.10,1.1" fill="none" stroke="#a6a6a6" stroke-width="0.75"/></svg><div class="t " style="left:364.90px;top:78.00px;font-size:5.5px;letter-spacing:-0.143px;color:#555">Paragraph</div><svg style="left:458.80px;top:78.60px" width="4" height="4" viewBox="0 0 4 4" ><path d="M0.4,2 V0.4 H2 M1.5,1.500 L3.5,3.500 M3.600,1.800 V3.600 H1.800" fill="none" stroke="#bbb" stroke-width="0.6"/></svg><div class="sep" style="left:465.1px;top:38.5px;height:43.5px"></div><div class="a" style="left:469.8px;top:39.5px;width:65px;height:31.2px;background:#fff;border:0.7px solid #e3e3e3;box-sizing:border-box"></div><svg style="left:469.80px;top:39.50px" width="65" height="31.2" viewBox="0 0 65 31.2" ><g fill="none" stroke="#555" stroke-width="0.8"><rect x="2.3000000000000003" y="1.6999999999999997" width="6.800" height="6.800" stroke="#3a7ad0" fill="#e8f0fb"/><path d="M4.1,7.3 L5.7,2.8999999999999995 L7.300000000000001,7.3 M4.7,5.8999999999999995 H6.7" stroke="#3a7ad0" stroke-width="0.65"/><path d="M12.8,1.5999999999999996 L19.8,8.6"/><path d="M23.3,1.5999999999999996 L30.1,8.399999999999999 M30.3,6.1 V8.6 H27.8"/><rect x="33.0" y="2.3" width="8" height="5.600"/><ellipse cx="47.6" cy="5.1" rx="4.200" ry="2.900"/><rect x="54.1" y="2.3" width="8" height="5.600" rx="1.600"/><path d="M2.1,18.6 L5.7,11.8 L9.3,18.6 Z"/><path d="M12.8,12.100000000000001 H16.3 V18.5 H19.8"/><path d="M23.0,12.100000000000001 H26.3 V17.8 H29.8 M28.400000000000002,16.3 L30.1,17.8 L28.400000000000002,19.3"/><path d="M33.0,14.0 H37.3 V12.0 L41.0,15.3 L37.3,18.6 V16.6 H33.0 Z"/><path d="M46.0,11.5 H49.2 V15.5 H51.0 L47.6,19.2 L44.2,15.5 H46.0 Z"/><path d="M54.5,12.100000000000001 H59.1 L61.7,14.700000000000001 V18.6 H57.1 C56.9,16.8 54.5,17.5 54.5,15.8 Z"/><path d="M2.7,22.7 C6.7,20.7 9.7,24.7 5.7,25.7 C1.7000000000000002,26.7 2.7,29.7 8.2,28.2 L9.2,29.3"/><path d="M12.8,22.7 C17.3,22.7 19.3,25.2 19.8,29.3"/><path d="M23.0,26.2 C24.3,22.2 26.3,22.2 27.3,25.7 C28.0,28.2 29.3,28.9 30.3,27.9"/><path d="M38.8,21.9 C36.2,21.9 38.0,25.4 35.2,25.7 C38.0,26.0 36.2,29.5 38.8,29.5"/><path d="M45.800000000000004,21.9 C48.4,21.9 46.6,25.4 49.4,25.7 C46.6,26.0 48.4,29.5 45.800000000000004,29.5"/><path d="M54.6,22.2 L61.6,29.2"/></g></svg><div class="a" style="left:535.2px;top:39.5px;width:6.4px;height:10.6px;background:#fdfdfd;border:0.7px solid #dcdcdc;box-sizing:border-box"></div><div class="a" style="left:535.2px;top:49.9px;width:6.4px;height:10.6px;background:#fdfdfd;border:0.7px solid #b4b4b4;box-sizing:border-box"></div><div class="a" style="left:535.2px;top:60.3px;width:6.4px;height:10.6px;background:#fdfdfd;border:0.7px solid #b4b4b4;box-sizing:border-box"></div><svg style="left:535.90px;top:42.00px" width="5" height="27" viewBox="0 0 5 27" ><path d="M0.9,3.500 L2.500,1.800 L4.100,3.500" fill="none" stroke="#ccc" stroke-width="0.7"/><path d="M0.9,12.400 L2.500,14.100 L4.100,12.400" fill="none" stroke="#444" stroke-width="0.75"/><path d="M0.9,21.700 H4.100 M0.9,23.200 L2.500,24.900 L4.100,23.200" fill="none" stroke="#444" stroke-width="0.75"/></svg><svg style="left:547.00px;top:39.40px" width="16" height="15.5" viewBox="0 0 16 15.5" ><rect x="3.200" y="3.200" width="8.800" height="8.800" fill="#f8d28a" stroke="#e8a33a" stroke-width="0.9"/><rect x="0.6" y="0.6" width="5.200" height="5.200" fill="#fff" stroke="#666" stroke-width="0.9"/><rect x="9.600" y="9.400" width="5.200" height="5.200" fill="#fff" stroke="#666" stroke-width="0.9"/></svg><div class="t " style="left:544.30px;top:57.00px;font-size:6.0px;letter-spacing:-0.178px;">Arrange</div><svg style="left:551.90px;top:65.90px" width="5" height="4" viewBox="0 0 5 4" ><path d="M0.90,1.1 L2.5,2.9 L4.10,1.1" fill="none" stroke="#555" stroke-width="0.75"/></svg><svg style="left:570.40px;top:39.40px" width="16" height="15.5" viewBox="0 0 16 15.5" ><rect x="0.6" y="0.6" width="13" height="13" rx="1" fill="#f8f8f8" stroke="#c6c6c6" stroke-width="0.9"/><path d="M6,14.800 L7.500,10.800 L13,5 L15,7 L9.500,12.800 Z" fill="#f3f2f1" stroke="#bdbdbd" stroke-width="0.8"/></svg><div class="t g" style="left:570.60px;top:57.00px;font-size:6.0px;letter-spacing:-0.107px;">Quick</div><div class="t g" style="left:567.70px;top:66.00px;font-size:6.0px;letter-spacing:-0.007px;">Styles</div><svg style="left:584.70px;top:66.30px" width="5" height="4" viewBox="0 0 5 4" ><path d="M0.90,1.1 L2.5,2.9 L4.10,1.1" fill="none" stroke="#a6a6a6" stroke-width="0.75"/></svg><svg style="left:591.40px;top:39.60px" width="8" height="8" viewBox="0 0 8 8" ><path d="M1.600,4 L4,0.8 L6.400,4 L4,5.500 Z M5.800,2.800 C7,3.500 7,4.500 6.500,5" fill="none" stroke="#a6a6a6" stroke-width="0.7"/><rect x="0.3" y="6.400" width="7.400" height="1.200" fill="#a6a6a6"/></svg><div class="t g" style="left:600.90px;top:41.00px;font-size:6.0px;letter-spacing:-0.048px;">Shape Fill</div><svg style="left:627.80px;top:41.50px" width="5" height="4" viewBox="0 0 5 4" ><path d="M0.90,1.1 L2.5,2.9 L4.10,1.1" fill="none" stroke="#a6a6a6" stroke-width="0.75"/></svg><svg style="left:591.40px;top:50.50px" width="8" height="8" viewBox="0 0 8 8" ><path d="M0.5,0.8 H4.500 M0.5,0.800 V5.500 H6 V3.800 M2.500,4.200 L6.500,0.3 L7.500,1.300 L3.500,5 Z" fill="none" stroke="#a6a6a6" stroke-width="0.7"/><rect x="0.3" y="6.600" width="7.400" height="1.200" fill="#a6a6a6"/></svg><div class="t g" style="left:600.90px;top:51.00px;font-size:6.0px;letter-spacing:-0.041px;">Shape Outline</div><svg style="left:639.50px;top:52.30px" width="5" height="4" viewBox="0 0 5 4" ><path d="M0.90,1.1 L2.5,2.9 L4.10,1.1" fill="none" stroke="#a6a6a6" stroke-width="0.75"/></svg><svg style="left:591.40px;top:61.30px" width="8.4" height="8" viewBox="0 0 8.4 8" ><ellipse cx="3.800" cy="4.500" rx="3.300" ry="2.500" fill="none" stroke="#a6a6a6" stroke-width="0.75"/><path d="M2.300,5.800 L6.300,0.900 L7.800,2 L4,6.500" fill="none" stroke="#a6a6a6" stroke-width="0.7"/></svg><div class="t g" style="left:600.90px;top:62.00px;font-size:6.0px;letter-spacing:-0.119px;">Shape Effects</div><svg style="left:637.30px;top:63.20px" width="5" height="4" viewBox="0 0 5 4" ><path d="M0.90,1.1 L2.5,2.9 L4.10,1.1" fill="none" stroke="#a6a6a6" stroke-width="0.75"/></svg><div class="t " style="left:544.30px;top:78.00px;font-size:5.5px;letter-spacing:-0.282px;color:#555">Drawing</div><svg style="left:644.30px;top:78.40px" width="4" height="4" viewBox="0 0 4 4" ><path d="M0.4,2 V0.4 H2 M1.5,1.500 L3.5,3.500 M3.600,1.800 V3.600 H1.800" fill="none" stroke="#bbb" stroke-width="0.6"/></svg><div class="sep" style="left:650.3px;top:38.5px;height:43.5px"></div><svg style="left:656.50px;top:39.40px" width="9" height="8" viewBox="0 0 9 8" ><circle cx="5.600" cy="3.100" r="2.600" fill="none" stroke="#444" stroke-width="0.8"/><path d="M3.700,5 L0.6,7.600" stroke="#444" stroke-width="0.9"/></svg><div class="t " style="left:666.00px;top:41.00px;font-size:6.0px;letter-spacing:-0.218px;">Find</div><svg style="left:655.80px;top:50.20px" width="9" height="8.5" viewBox="0 0 9 8.5" ><path d="M3.400,2.800 C1,3 0.6,6.200 3,6.800 M2,5.600 L3.300,7 L1.800,8" fill="none" stroke="#2f7fd6" stroke-width="0.8"/></svg><div class="t " style="left:659.60px;top:50.00px;font-size:5.2px;letter-spacing:0.000px;color:#a03cc0;font-weight:bold">b</div><div class="t " style="left:660.60px;top:54.00px;font-size:5.2px;letter-spacing:0.000px;color:#2f7fd6;font-weight:bold">c</div><div class="t " style="left:666.00px;top:51.00px;font-size:6.0px;letter-spacing:-0.159px;">Replace</div><svg style="left:691.20px;top:52.30px" width="5" height="4" viewBox="0 0 5 4" ><path d="M0.90,1.1 L2.5,2.9 L4.10,1.1" fill="none" stroke="#555" stroke-width="0.75"/></svg><svg style="left:657.00px;top:61.00px" width="6.5" height="8.5" viewBox="0 0 6.5 8.5" ><path d="M0.7,0.6 V6.800 L2.300,5.400 L3.500,7.900 L4.600,7.400 L3.400,5 L5.500,4.900 Z" fill="#fff" stroke="#444" stroke-width="0.75"/></svg><div class="t " style="left:666.00px;top:62.00px;font-size:6.0px;letter-spacing:-0.096px;">Select</div><svg style="left:683.00px;top:63.20px" width="5" height="4" viewBox="0 0 5 4" ><path d="M0.90,1.1 L2.5,2.9 L4.10,1.1" fill="none" stroke="#555" stroke-width="0.75"/></svg><div class="t " style="left:668.00px;top:78.00px;font-size:5.5px;letter-spacing:-0.117px;color:#555">Editing</div><div class="sep" style="left:701.3px;top:38.5px;height:43.5px"></div><svg style="left:718.80px;top:41.20px" width="11.5" height="11" viewBox="0 0 11.5 11" ><path d="M6,0.2 L10.800,2.500 V7.300 L6,10.300 L1.800,8.300 V2.800 Z" fill="#1b6fd2"/><path d="M6,0.200 L10.800,2.500 L6.800,4.500 L1.800,2.800 Z" fill="#3f97ee"/><rect x="0.8" y="6.300" width="3.600" height="3.600" rx="1" fill="#1b6fd2" stroke="#f3f2f1" stroke-width="0.7"/></svg><div class="t " style="left:717.20px;top:58.00px;font-size:6.0px;letter-spacing:-0.177px;">Show</div><div class="t " style="left:712.70px;top:65.00px;font-size:6.0px;letter-spacing:-0.236px;">Taskpane</div><div class="t " style="left:703.20px;top:78.00px;font-size:5.5px;letter-spacing:-0.153px;color:#555">Commands Group</div><div class="sep" style="left:748px;top:38.5px;height:43.5px"></div><svg style="left:775.20px;top:79.00px" width="6" height="4" viewBox="0 0 6 4" ><path d="M0.5,3 L3,0.7 L5.500,3" fill="none" stroke="#444" stroke-width="0.8"/></svg>
<div class="t " style="left:10.20px;top:94.00px;font-size:7.0px;letter-spacing:0.000px;color:#c8502e">1</div><div class="t " style="left:10.20px;top:157.00px;font-size:7.0px;letter-spacing:0.000px;color:#666">2</div><div class="t " style="left:10.20px;top:220.00px;font-size:7.0px;letter-spacing:0.000px;color:#666">3</div><div class="t " style="left:10.20px;top:283.00px;font-size:7.0px;letter-spacing:0.000px;color:#666">4</div><div class="t " style="left:10.20px;top:346.00px;font-size:7.0px;letter-spacing:0.000px;color:#666">5</div><div class="a" style="left:20.40px;top:92.40px;width:96.60px;height:56.00px;background:#ee8a70;"></div><div class="thumb" style="top:94.3px"><svg style="left:0.00px;top:0.00px" width="92.8" height="52.2" viewBox="0 0 500 281" preserveAspectRatio="none"><use href="#art" x="0" y="0" width="500" height="281"/></svg><div class="t " style="left:6.90px;top:16.70px;font-size:3.9px;letter-spacing:0.030px;font-weight:bold;color:#fff">Click to edit</div><div class="t " style="left:6.90px;top:22.70px;font-size:3.9px;letter-spacing:0.058px;font-weight:bold;color:#fff">Master title style</div><div class="t " style="left:6.90px;top:30.70px;font-size:2.9px;letter-spacing:0.080px;font-weight:bold;color:#e8c040">FPPT.com</div></div><div class="thumb" style="top:157.4px"><div class="a" style="left:0;top:0;width:92.8px;height:12.9px;background:#000;overflow:hidden"><svg style="left:28.00px;top:-12.00px" width="66.5" height="37.4" viewBox="0 0 500 281" preserveAspectRatio="none"><use href="#art" x="0" y="0" width="500" height="281"/></svg><div class="a" style="left:27px;top:0;width:14px;height:13px;background:linear-gradient(90deg,#000,rgba(0,0,0,0))"></div></div><div class="a" style="left:0;top:12.9px;width:92.8px;height:6px;background:linear-gradient(#e3e9ef,#fff)"></div><div class="t " style="left:5.50px;top:7.60px;font-size:3.0px;letter-spacing:0.199px;font-weight:bold;color:#e8c040">Slide Title</div><div class="t " style="left:6.10px;top:15.60px;font-size:2.8px;letter-spacing:0.000px;color:#333">•</div><div class="t " style="left:9.40px;top:15.60px;font-size:2.8px;letter-spacing:0.102px;font-weight:bold;color:#333">Make Effective Presentations</div><div class="t " style="left:6.10px;top:20.60px;font-size:2.8px;letter-spacing:0.000px;color:#333">•</div><div class="t " style="left:9.40px;top:20.60px;font-size:2.8px;letter-spacing:0.094px;font-weight:bold;color:#333">Using Awesome Backgrounds</div><div class="t " style="left:6.10px;top:25.60px;font-size:2.8px;letter-spacing:0.000px;color:#333">•</div><div class="t " style="left:9.40px;top:25.60px;font-size:2.8px;letter-spacing:0.088px;font-weight:bold;color:#333">Engage your Audience</div><div class="t " style="left:6.10px;top:30.60px;font-size:2.8px;letter-spacing:0.000px;color:#333">•</div><div class="t " style="left:9.40px;top:30.60px;font-size:2.8px;letter-spacing:0.134px;font-weight:bold;color:#333">Capture Audience Attention</div></div><div class="thumb" style="top:220.4px"><svg style="left:70.70px;top:0.00px" width="22.2" height="52.2" viewBox="242 0 119.5 281" preserveAspectRatio="none"><use href="#art" x="0" y="0" width="500" height="281"/></svg><div class="t " style="left:5.50px;top:6.60px;font-size:3.0px;letter-spacing:0.199px;font-weight:bold;color:#2a7ad0">Slide Title</div><div class="t " style="left:6.10px;top:12.60px;font-size:2.8px;letter-spacing:0.000px;color:#333">•</div><div class="t " style="left:9.40px;top:12.60px;font-size:2.8px;letter-spacing:0.102px;font-weight:bold;color:#333">Make Effective Presentations</div><div class="t " style="left:6.10px;top:17.60px;font-size:2.8px;letter-spacing:0.000px;color:#333">•</div><div class="t " style="left:9.40px;top:17.60px;font-size:2.8px;letter-spacing:0.094px;font-weight:bold;color:#333">Using Awesome Backgrounds</div><div class="t " style="left:6.10px;top:22.60px;font-size:2.8px;letter-spacing:0.000px;color:#333">•</div><div class="t " style="left:9.40px;top:22.60px;font-size:2.8px;letter-spacing:0.088px;font-weight:bold;color:#333">Engage your Audience</div><div class="t " style="left:6.10px;top:28.60px;font-size:2.8px;letter-spacing:0.000px;color:#333">•</div><div class="t " style="left:9.40px;top:28.60px;font-size:2.8px;letter-spacing:0.134px;font-weight:bold;color:#333">Capture Audience Attention</div></div><div class="thumb" style="top:283.4px"><div class="a" style="left:0;top:0;width:92.8px;height:12.9px;background:#000;overflow:hidden"><svg style="left:28.00px;top:-12.00px" width="66.5" height="37.4" viewBox="0 0 500 281" preserveAspectRatio="none"><use href="#art" x="0" y="0" width="500" height="281"/></svg><div class="a" style="left:27px;top:0;width:14px;height:13px;background:linear-gradient(90deg,#000,rgba(0,0,0,0))"></div></div><div class="a" style="left:0;top:12.9px;width:92.8px;height:6px;background:linear-gradient(#e3e9ef,#fff)"></div><div class="t " style="left:6.50px;top:7.60px;font-size:3.0px;letter-spacing:0.199px;font-weight:bold;color:#e8c040">Slide Title</div><div class="t " style="left:19.70px;top:19.60px;font-size:2.6px;letter-spacing:0.075px;font-weight:bold;color:#222">Product A</div><div class="t " style="left:60.70px;top:19.60px;font-size:2.6px;letter-spacing:0.064px;font-weight:bold;color:#222">Product B</div><div class="t " style="left:18.70px;top:23.60px;font-size:2.4px;letter-spacing:0.000px;color:#444">•</div><div class="t " style="left:21.90px;top:23.60px;font-size:2.5px;letter-spacing:0.020px;font-weight:bold;color:#444">Feature 1</div><div class="t " style="left:59.70px;top:23.60px;font-size:2.4px;letter-spacing:0.000px;color:#444">•</div><div class="t " style="left:62.90px;top:23.60px;font-size:2.5px;letter-spacing:0.020px;font-weight:bold;color:#444">Feature 1</div><div class="t " style="left:18.70px;top:28.60px;font-size:2.4px;letter-spacing:0.000px;color:#444">•</div><div class="t " style="left:21.90px;top:28.60px;font-size:2.5px;letter-spacing:0.020px;font-weight:bold;color:#444">Feature 2</div><div class="t " style="left:59.70px;top:28.60px;font-size:2.4px;letter-spacing:0.000px;color:#444">•</div><div class="t " style="left:62.90px;top:28.60px;font-size:2.5px;letter-spacing:0.020px;font-weight:bold;color:#444">Feature 2</div><div class="t " style="left:18.70px;top:32.60px;font-size:2.4px;letter-spacing:0.000px;color:#444">•</div><div class="t " style="left:21.90px;top:32.60px;font-size:2.5px;letter-spacing:0.020px;font-weight:bold;color:#444">Feature 3</div><div class="t " style="left:59.70px;top:32.60px;font-size:2.4px;letter-spacing:0.000px;color:#444">•</div><div class="t " style="left:62.90px;top:32.60px;font-size:2.5px;letter-spacing:0.020px;font-weight:bold;color:#444">Feature 3</div></div><div class="thumb" style="top:346.2px"><div class="a" style="left:0;top:0;width:92.8px;height:12.9px;background:#000;overflow:hidden"><svg style="left:28.00px;top:-12.00px" width="66.5" height="37.4" viewBox="0 0 500 281" preserveAspectRatio="none"><use href="#art" x="0" y="0" width="500" height="281"/></svg><div class="a" style="left:27px;top:0;width:14px;height:13px;background:linear-gradient(90deg,#000,rgba(0,0,0,0))"></div></div><div class="a" style="left:0;top:12.9px;width:92.8px;height:6px;background:linear-gradient(#e3e9ef,#fff)"></div><div class="a" style="left:39.20px;top:24.20px;width:13.80px;height:3.40px;background:#c4d6ec;"></div><div class="t " style="left:40.30px;top:25.80px;font-size:2.5px;letter-spacing:0.156px;font-weight:bold;color:#123">fppt.com</div></div>
<div class="a" style="left:209.10px;top:86.50px;width:499.60px;height:6.60px;background:#fdfdfd;"></div><svg style="left:209.10px;top:86.50px" width="500" height="7" viewBox="0 0 500 7" ><rect x="5.7" y="2.900" width="0.7" height="0.9" fill="#aaa"/><rect x="11.9" y="2.900" width="0.7" height="0.9" fill="#aaa"/><rect x="18.2" y="2.900" width="0.7" height="0.9" fill="#aaa"/><rect x="24.4" y="1.800" width="0.7" height="3" fill="#888"/><rect x="30.6" y="2.900" width="0.7" height="0.9" fill="#aaa"/><rect x="36.9" y="2.900" width="0.7" height="0.9" fill="#aaa"/><rect x="43.1" y="2.900" width="0.7" height="0.9" fill="#aaa"/><text x="49.7" y="5.3" font-size="5" text-anchor="middle" fill="#555" font-family="Liberation Sans, sans-serif">4</text><rect x="55.6" y="2.900" width="0.7" height="0.9" fill="#aaa"/><rect x="61.8" y="2.900" width="0.7" height="0.9" fill="#aaa"/><rect x="68.1" y="2.900" width="0.7" height="0.9" fill="#aaa"/><rect x="74.3" y="1.800" width="0.7" height="3" fill="#888"/><rect x="80.5" y="2.900" width="0.7" height="0.9" fill="#aaa"/><rect x="86.8" y="2.900" width="0.7" height="0.9" fill="#aaa"/><rect x="93.0" y="2.900" width="0.7" height="0.9" fill="#aaa"/><text x="99.6" y="5.3" font-size="5" text-anchor="middle" fill="#555" font-family="Liberation Sans, sans-serif">3</text><rect x="105.5" y="2.900" width="0.7" height="0.9" fill="#aaa"/><rect x="111.7" y="2.900" width="0.7" height="0.9" fill="#aaa"/><rect x="118.0" y="2.900" width="0.7" height="0.9" fill="#aaa"/><rect x="124.2" y="1.800" width="0.7" height="3" fill="#888"/><rect x="130.4" y="2.900" width="0.7" height="0.9" fill="#aaa"/><rect x="136.7" y="2.900" width="0.7" height="0.9" fill="#aaa"/><rect x="142.9" y="2.900" width="0.7" height="0.9" fill="#aaa"/><text x="149.5" y="5.3" font-size="5" text-anchor="middle" fill="#555" font-family="Liberation Sans, sans-serif">2</text><rect x="155.4" y="2.900" width="0.7" height="0.9" fill="#aaa"/><rect x="161.6" y="2.900" width="0.7" height="0.9" fill="#aaa"/><rect x="167.9" y="2.900" width="0.7" height="0.9" fill="#aaa"/><rect x="174.1" y="1.800" width="0.7" height="3" fill="#888"/><rect x="180.3" y="2.900" width="0.7" height="0.9" fill="#aaa"/><rect x="186.6" y="2.900" width="0.7" height="0.9" fill="#aaa"/><rect x="192.8" y="2.900" width="0.7" height="0.9" fill="#aaa"/><text x="199.4" y="5.3" font-size="5" text-anchor="middle" fill="#555" font-family="Liberation Sans, sans-serif">1</text><rect x="205.3" y="2.900" width="0.7" height="0.9" fill="#aaa"/><rect x="211.5" y="2.900" width="0.7" height="0.9" fill="#aaa"/><rect x="217.8" y="2.900" width="0.7" height="0.9" fill="#aaa"/><rect x="224.0" y="1.800" width="0.7" height="3" fill="#888"/><rect x="230.2" y="2.900" width="0.7" height="0.9" fill="#aaa"/><rect x="236.5" y="2.900" width="0.7" height="0.9" fill="#aaa"/><rect x="242.7" y="2.900" width="0.7" height="0.9" fill="#aaa"/><text x="249.3" y="5.3" font-size="5" text-anchor="middle" fill="#555" font-family="Liberation Sans, sans-serif">0</text><rect x="255.2" y="2.900" width="0.7" height="0.9" fill="#aaa"/><rect x="261.4" y="2.900" width="0.7" height="0.9" fill="#aaa"/><rect x="267.7" y="2.900" width="0.7" height="0.9" fill="#aaa"/><rect x="273.9" y="1.800" width="0.7" height="3" fill="#888"/><rect x="280.1" y="2.900" width="0.7" height="0.9" fill="#aaa"/><rect x="286.4" y="2.900" width="0.7" height="0.9" fill="#aaa"/><rect x="292.6" y="2.900" width="0.7" height="0.9" fill="#aaa"/><text x="299.2" y="5.3" font-size="5" text-anchor="middle" fill="#555" font-family="Liberation Sans, sans-serif">1</text><rect x="305.1" y="2.900" width="0.7" height="0.9" fill="#aaa"/><rect x="311.3" y="2.900" width="0.7" height="0.9" fill="#aaa"/><rect x="317.6" y="2.900" width="0.7" height="0.9" fill="#aaa"/><rect x="323.8" y="1.800" width="0.7" height="3" fill="#888"/><rect x="330.0" y="2.900" width="0.7" height="0.9" fill="#aaa"/><rect x="336.3" y="2.900" width="0.7" height="0.9" fill="#aaa"/><rect x="342.5" y="2.900" width="0.7" height="0.9" fill="#aaa"/><text x="349.1" y="5.3" font-size="5" text-anchor="middle" fill="#555" font-family="Liberation Sans, sans-serif">2</text><rect x="355.0" y="2.900" width="0.7" height="0.9" fill="#aaa"/><rect x="361.2" y="2.900" width="0.7" height="0.9" fill="#aaa"/><rect x="367.5" y="2.900" width="0.7" height="0.9" fill="#aaa"/><rect x="373.7" y="1.800" width="0.7" height="3" fill="#888"/><rect x="379.9" y="2.900" width="0.7" height="0.9" fill="#aaa"/><rect x="386.2" y="2.900" width="0.7" height="0.9" fill="#aaa"/><rect x="392.4" y="2.900" width="0.7" height="0.9" fill="#aaa"/><text x="399.0" y="5.3" font-size="5" text-anchor="middle" fill="#555" font-family="Liberation Sans, sans-serif">3</text><rect x="404.9" y="2.900" width="0.7" height="0.9" fill="#aaa"/><rect x="411.1" y="2.900" width="0.7" height="0.9" fill="#aaa"/><rect x="417.4" y="2.900" width="0.7" height="0.9" fill="#aaa"/><rect x="423.6" y="1.800" width="0.7" height="3" fill="#888"/><rect x="429.8" y="2.900" width="0.7" height="0.9" fill="#aaa"/><rect x="436.1" y="2.900" width="0.7" height="0.9" fill="#aaa"/><rect x="442.3" y="2.900" width="0.7" height="0.9" fill="#aaa"/><text x="448.9" y="5.3" font-size="5" text-anchor="middle" fill="#555" font-family="Liberation Sans, sans-serif">4</text><rect x="454.8" y="2.900" width="0.7" height="0.9" fill="#aaa"/><rect x="461.0" y="2.900" width="0.7" height="0.9" fill="#aaa"/><rect x="467.3" y="2.900" width="0.7" height="0.9" fill="#aaa"/><rect x="473.5" y="1.800" width="0.7" height="3" fill="#888"/><rect x="479.7" y="2.900" width="0.7" height="0.9" fill="#aaa"/><rect x="486.0" y="2.900" width="0.7" height="0.9" fill="#aaa"/><rect x="492.2" y="2.900" width="0.7" height="0.9" fill="#aaa"/></svg><div class="a" style="left:130.40px;top:102.30px;width:6.60px;height:280.20px;background:#fdfdfd;"></div><svg style="left:130.40px;top:102.30px" width="7" height="280.2" viewBox="0 0 7 280.2" ><rect y="2.4" x="2.900" height="0.7" width="0.9" fill="#aaa"/><rect y="8.7" x="2.900" height="0.7" width="0.9" fill="#aaa"/><rect y="14.9" x="1.800" height="0.7" width="3" fill="#888"/><rect y="21.1" x="2.900" height="0.7" width="0.9" fill="#aaa"/><rect y="27.4" x="2.900" height="0.7" width="0.9" fill="#aaa"/><rect y="33.6" x="2.900" height="0.7" width="0.9" fill="#aaa"/><text transform="translate(5.3,40.2) rotate(-90)" font-size="5" text-anchor="middle" fill="#555" font-family="Liberation Sans, sans-serif">2</text><rect y="46.1" x="2.900" height="0.7" width="0.9" fill="#aaa"/><rect y="52.3" x="2.900" height="0.7" width="0.9" fill="#aaa"/><rect y="58.6" x="2.900" height="0.7" width="0.9" fill="#aaa"/><rect y="64.8" x="1.800" height="0.7" width="3" fill="#888"/><rect y="71.0" x="2.900" height="0.7" width="0.9" fill="#aaa"/><rect y="77.3" x="2.900" height="0.7" width="0.9" fill="#aaa"/><rect y="83.5" x="2.900" height="0.7" width="0.9" fill="#aaa"/><text transform="translate(5.3,90.1) rotate(-90)" font-size="5" text-anchor="middle" fill="#555" font-family="Liberation Sans, sans-serif">1</text><rect y="96.0" x="2.900" height="0.7" width="0.9" fill="#aaa"/><rect y="102.2" x="2.900" height="0.7" width="0.9" fill="#aaa"/><rect y="108.5" x="2.900" height="0.7" width="0.9" fill="#aaa"/><rect y="114.7" x="1.800" height="0.7" width="3" fill="#888"/><rect y="120.9" x="2.900" height="0.7" width="0.9" fill="#aaa"/><rect y="127.2" x="2.900" height="0.7" width="0.9" fill="#aaa"/><rect y="133.4" x="2.900" height="0.7" width="0.9" fill="#aaa"/><text transform="translate(5.3,140.0) rotate(-90)" font-size="5" text-anchor="middle" fill="#555" font-family="Liberation Sans, sans-serif">0</text><rect y="145.9" x="2.900" height="0.7" width="0.9" fill="#aaa"/><rect y="152.1" x="2.900" height="0.7" width="0.9" fill="#aaa"/><rect y="158.4" x="2.900" height="0.7" width="0.9" fill="#aaa"/><rect y="164.6" x="1.800" height="0.7" width="3" fill="#888"/><rect y="170.8" x="2.900" height="0.7" width="0.9" fill="#aaa"/><rect y="177.1" x="2.900" height="0.7" width="0.9" fill="#aaa"/><rect y="183.3" x="2.900" height="0.7" width="0.9" fill="#aaa"/><text transform="translate(5.3,189.9) rotate(-90)" font-size="5" text-anchor="middle" fill="#555" font-family="Liberation Sans, sans-serif">1</text><rect y="195.8" x="2.900" height="0.7" width="0.9" fill="#aaa"/><rect y="202.0" x="2.900" height="0.7" width="0.9" fill="#aaa"/><rect y="208.3" x="2.900" height="0.7" width="0.9" fill="#aaa"/><rect y="214.5" x="1.800" height="0.7" width="3" fill="#888"/><rect y="220.7" x="2.900" height="0.7" width="0.9" fill="#aaa"/><rect y="227.0" x="2.900" height="0.7" width="0.9" fill="#aaa"/><rect y="233.2" x="2.900" height="0.7" width="0.9" fill="#aaa"/><text transform="translate(5.3,239.8) rotate(-90)" font-size="5" text-anchor="middle" fill="#555" font-family="Liberation Sans, sans-serif">2</text><rect y="245.7" x="2.900" height="0.7" width="0.9" fill="#aaa"/><rect y="251.9" x="2.900" height="0.7" width="0.9" fill="#aaa"/><rect y="258.2" x="2.900" height="0.7" width="0.9" fill="#aaa"/><rect y="264.4" x="1.800" height="0.7" width="3" fill="#888"/><rect y="270.6" x="2.900" height="0.7" width="0.9" fill="#aaa"/><rect y="276.9" x="2.900" height="0.7" width="0.9" fill="#aaa"/></svg>
<div class="a" style="left:207.70px;top:100.80px;width:501.60px;height:282.40px;background:#efefef;"></div><svg style="left:208.70px;top:101.80px" width="499.9" height="280.7" viewBox="0 0 500 281" preserveAspectRatio="none"><use href="#art" x="0" y="0" width="500" height="281"/></svg><div class="t w" style="left:247.40px;top:188.00px;font-size:22.8px;letter-spacing:-0.134px;-webkit-text-stroke:0;text-shadow:0.4px 0.9px 1.2px rgba(0,0,0,0.55)">Click to edit</div><div class="t w" style="left:247.40px;top:217.00px;font-size:22.8px;letter-spacing:0.244px;-webkit-text-stroke:0;text-shadow:0.4px 0.9px 1.2px rgba(0,0,0,0.55)">Master title style</div><div class="t " style="left:247.40px;top:267.00px;font-size:15.6px;letter-spacing:0.169px;color:#f3c63d;-webkit-text-stroke:0">FPPT.com</div>
<div class="a" style="left:3.80px;top:410.40px;width:777.20px;height:8.50px;background:#f3f2f1;"></div><div class="t " style="left:7.70px;top:414.00px;font-size:5.7px;letter-spacing:-0.168px;color:#555">Slide 1 of 5</div><svg style="left:42.30px;top:411.60px" width="8" height="7" viewBox="0 0 8 7" ><path d="M0.5,0.7 H3 C3.700,0.7 4,1.100 4,1.600 V6.300 C4,5.800 3.700,5.500 3,5.500 H0.5 Z M7.500,0.700 H5 C4.300,0.700 4,1.100 4,1.600 V6.300 C4,5.800 4.300,5.500 5,5.500 H7.500 Z" fill="none" stroke="#555" stroke-width="0.7"/></svg><div class="t " style="left:56.70px;top:414.00px;font-size:5.7px;letter-spacing:-0.239px;color:#555">English (United States)</div><svg style="left:582.00px;top:411.60px" width="7.5" height="7" viewBox="0 0 7.5 7" ><path d="M0.4,6.300 H7 M1.400,6.300 V3.500 H6 V6.300 M2.800,3.500 V2 H4.600 V3.500" fill="none" stroke="#555" stroke-width="0.7"/></svg><div class="t " style="left:591.00px;top:414.00px;font-size:5.7px;letter-spacing:-0.158px;color:#555">Notes</div><div class="a" style="left:614.00px;top:410.40px;width:16.80px;height:8.50px;background:#cfcfcf;"></div><svg style="left:618.40px;top:411.60px" width="8.6" height="6.8" viewBox="0 0 8.6 6.8" ><rect x="0.5" y="0.5" width="7.600" height="5.600" fill="none" stroke="#444" stroke-width="0.85"/><rect x="2.300" y="2" width="4" height="2.600" fill="#444"/></svg><svg style="left:636.20px;top:411.60px" width="8.4" height="6.8" viewBox="0 0 8.4 6.8" ><rect x="0.5" y="0.4" width="2.800" height="2.300" fill="none" stroke="#555" stroke-width="0.75"/><rect x="4.900" y="0.4" width="2.800" height="2.300" fill="none" stroke="#555" stroke-width="0.75"/><rect x="0.5" y="3.900" width="2.800" height="2.300" fill="none" stroke="#555" stroke-width="0.75"/><rect x="4.900" y="3.900" width="2.800" height="2.300" fill="none" stroke="#555" stroke-width="0.75"/></svg><svg style="left:654.00px;top:411.60px" width="8.2" height="6.8" viewBox="0 0 8.2 6.8" ><rect x="0.5" y="0.5" width="7" height="5.600" fill="none" stroke="#555" stroke-width="0.75"/><path d="M4,0.5 V6.100 M1.400,1.900 H3 M1.400,3.300 H3 M1.400,4.700 H3 M5,1.900 H6.600 M5,3.300 H6.600 M5,4.700 H6.600" stroke="#555" stroke-width="0.55"/></svg><svg style="left:672.40px;top:411.40px" width="8.4" height="7.2" viewBox="0 0 8.4 7.2" ><path d="M0.3,0.6 H8 M1.100,0.6 V4.300 H7.200 V0.6 M4.150,4.300 V6.300 M2.500,6.600 H5.800" fill="none" stroke="#555" stroke-width="0.75"/></svg><div class="a" style="left:687.60px;top:414.40px;width:4.00px;height:0.80px;background:#555;"></div><div class="a" style="left:694.30px;top:414.50px;width:50.00px;height:0.60px;background:#aaa;"></div><div class="a" style="left:717.80px;top:411.20px;width:2.70px;height:7.00px;background:#5a5a5a;"></div><div class="a" style="left:746.80px;top:414.40px;width:4.00px;height:0.80px;background:#555;"></div><div class="a" style="left:748.40px;top:412.80px;width:0.80px;height:4.00px;background:#555;"></div><div class="t " style="left:756.00px;top:414.00px;font-size:5.4px;letter-spacing:-0.428px;color:#555">103%</div><svg style="left:773.40px;top:411.00px" width="7.6" height="7.6" viewBox="0 0 7.6 7.6" ><rect x="2" y="2.200" width="3.800" height="3.400" fill="none" stroke="#555" stroke-width="0.75"/><path d="M3.900,0.2 V1.900 M3.900,5.900 V7.600 M0.2,3.900 H1.700 M6.100,3.900 H7.600" stroke="#555" stroke-width="0.75"/></svg>
</div></body></html>
